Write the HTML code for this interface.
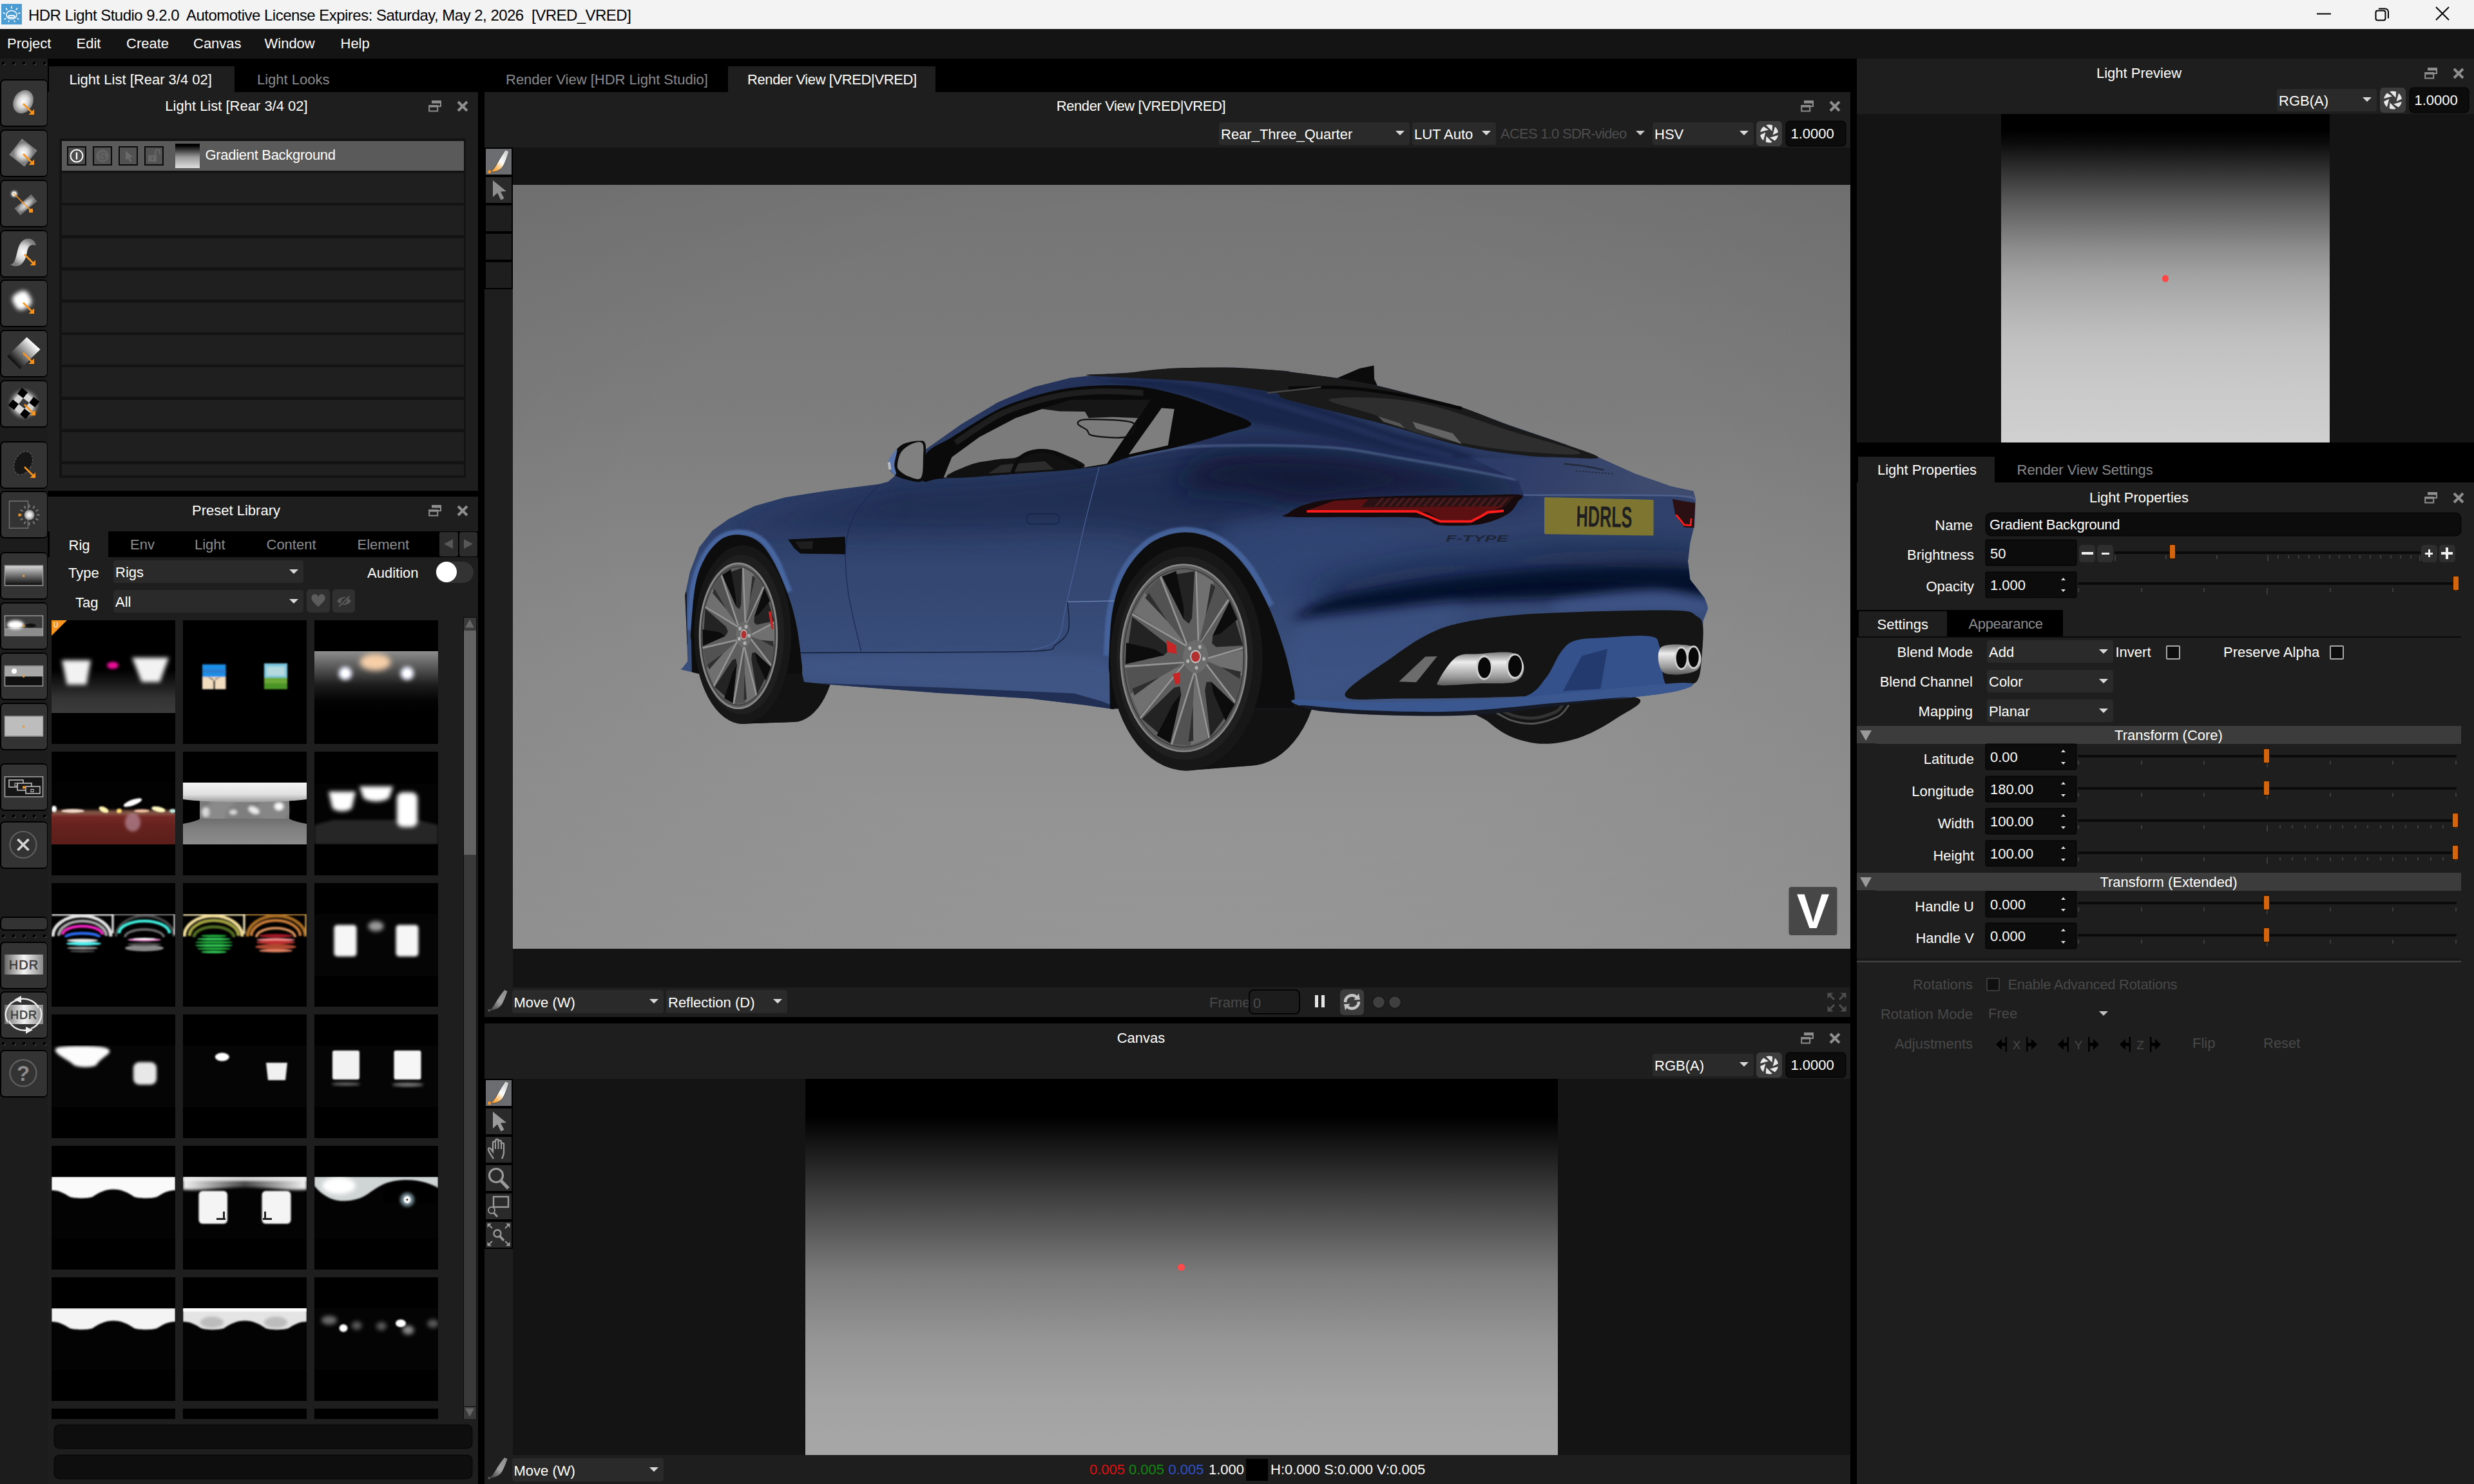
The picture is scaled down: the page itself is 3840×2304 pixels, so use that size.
<!DOCTYPE html>
<html lang="en"><head><meta charset="utf-8"><title>HDR Light Studio</title>
<style>
html,body{margin:0;padding:0}
body{width:3840px;height:2304px;background:#000;position:relative;overflow:hidden;font-family:"Liberation Sans",sans-serif;font-size:22px;color:#fff}
body div,body svg{position:absolute;box-sizing:content-box}
svg{overflow:visible;display:block}
</style></head>
<body>
<svg width="0" height="0" style="position:absolute"><defs>
<radialGradient id="rgw"><stop offset="0" stop-color="#fff"/><stop offset="0.5" stop-color="#d8d8d8"/><stop offset="1" stop-color="#7e7e7e"/></radialGradient>
<radialGradient id="rgs"><stop offset="0" stop-color="#fff"/><stop offset="0.35" stop-color="#f0f0f0"/><stop offset="1" stop-color="#333" stop-opacity="0"/></radialGradient>
<radialGradient id="rgk"><stop offset="0.55" stop-color="#fff" stop-opacity="0.8"/><stop offset="1" stop-color="#333" stop-opacity="0"/></radialGradient>
<linearGradient id="lgd" x1="0" y1="1" x2="1" y2="0"><stop offset="0" stop-color="#000"/><stop offset="1" stop-color="#fff"/></linearGradient>
<linearGradient id="lgd2" gradientUnits="userSpaceOnUse" x1="17" y1="50" x2="50" y2="19"><stop offset="0" stop-color="#000"/><stop offset="1" stop-color="#fff"/></linearGradient>
<linearGradient id="brg" gradientUnits="userSpaceOnUse" x1="32" y1="5" x2="9" y2="36"><stop offset="0" stop-color="#d0d0d0"/><stop offset="0.450" stop-color="#ffffff"/><stop offset="0.720" stop-color="#ffc070"/><stop offset="1" stop-color="#f7941d"/></linearGradient>
<linearGradient id="brg2" gradientUnits="userSpaceOnUse" x1="28" y1="3" x2="5" y2="33"><stop offset="0" stop-color="#8e8e8e"/><stop offset="0.500" stop-color="#a0a0a0"/><stop offset="1" stop-color="#3c3c3c"/></linearGradient>
<linearGradient id="lgv" x1="0" y1="0" x2="0" y2="1"><stop offset="0" stop-color="#d8d8d8"/><stop offset="1" stop-color="#0a0a0a"/></linearGradient>
<linearGradient id="lgs" x1="0" y1="0" x2="1" y2="0"><stop offset="0" stop-color="#666"/><stop offset="0.5" stop-color="#f4f4f4"/><stop offset="1" stop-color="#888"/></linearGradient>
<filter id="b1" x="-50%" y="-50%" width="200%" height="200%"><feGaussianBlur stdDeviation="1"/></filter>
<filter id="b2" x="-50%" y="-50%" width="200%" height="200%"><feGaussianBlur stdDeviation="2"/></filter>
<filter id="b3" x="-50%" y="-50%" width="200%" height="200%"><feGaussianBlur stdDeviation="3"/></filter>
<filter id="b4" x="-50%" y="-50%" width="200%" height="200%"><feGaussianBlur stdDeviation="4.5"/></filter>
<filter id="b6" x="-50%" y="-50%" width="200%" height="200%"><feGaussianBlur stdDeviation="6"/></filter>
<filter id="b10" x="-50%" y="-50%" width="200%" height="200%"><feGaussianBlur stdDeviation="10"/></filter>
</defs></svg>
<div style="left:74px;top:91px;width:3766px;height:52px;background:#000;"></div>
<div style="left:76px;top:103px;width:288px;height:40px;background:#1e1e1e;"></div>
<div style="top:109px;height:30px;line-height:30px;font-size:22px;color:#fff;white-space:pre;left:107.5px;">Light List [Rear 3/4 02]</div>
<div style="top:108.5px;height:30px;line-height:30px;font-size:22px;color:#8a8a8a;white-space:pre;left:399px;">Light Looks</div>
<div style="left:74px;top:142.5px;width:668px;height:619px;background:#1e1e1e;"></div>
<div style="top:150px;height:30px;line-height:30px;font-size:22px;color:#fff;white-space:pre;left:67px;width:600px;text-align:center;">Light List [Rear 3/4 02]</div>
<svg style="left:664.5px;top:156px;" width="20" height="18" viewBox="0 0 20 18"><path d="M5 1H19V9H15" fill="none" stroke="#8e8e8e" stroke-width="2"/><path d="M5 1H19V4.5H5Z" fill="#8e8e8e"/><rect x="1.2" y="8" width="13" height="8.5" fill="none" stroke="#8e8e8e" stroke-width="2"/><rect x="1" y="7" width="13.4" height="3.6" fill="#8e8e8e"/></svg>
<svg style="left:708.5px;top:156px;" width="18" height="18" viewBox="0 0 18 18"><path d="M2 2L16 16M16 2L2 16" stroke="#8e8e8e" stroke-width="4" fill="none"/></svg>
<div style="left:92px;top:215px;width:631px;height:527px;background:#131313;"></div>
<div style="left:95.8px;top:219px;width:624.2px;height:45.6px;background:#5a5a5a;"></div>
<div style="left:95.8px;top:269.2px;width:624.2px;height:45.6px;background:#1f1f1f;"></div>
<div style="left:95.8px;top:319.4px;width:624.2px;height:45.6px;background:#1f1f1f;"></div>
<div style="left:95.8px;top:369.6px;width:624.2px;height:45.6px;background:#1f1f1f;"></div>
<div style="left:95.8px;top:419.8px;width:624.2px;height:45.6px;background:#1f1f1f;"></div>
<div style="left:95.8px;top:470px;width:624.2px;height:45.6px;background:#1f1f1f;"></div>
<div style="left:95.8px;top:520.2px;width:624.2px;height:45.6px;background:#1f1f1f;"></div>
<div style="left:95.8px;top:570.4px;width:624.2px;height:45.6px;background:#1f1f1f;"></div>
<div style="left:95.8px;top:620.6px;width:624.2px;height:45.6px;background:#1f1f1f;"></div>
<div style="left:95.8px;top:670.8px;width:624.2px;height:45.6px;background:#1f1f1f;"></div>
<div style="left:95.8px;top:721px;width:624.2px;height:17px;background:#1f1f1f;"></div>
<div style="left:104px;top:227px;width:30px;height:30px;background:#4c4c4c;box-sizing:border-box;border:2px solid #0a0a0a;"></div>
<div style="left:144px;top:227px;width:30px;height:30px;background:#525252;box-sizing:border-box;border:2px solid #0a0a0a;"></div>
<div style="left:184px;top:227px;width:30px;height:30px;background:#525252;box-sizing:border-box;border:2px solid #0a0a0a;"></div>
<div style="left:224px;top:227px;width:30px;height:30px;background:#525252;box-sizing:border-box;border:2px solid #0a0a0a;"></div>
<svg style="left:104px;top:227px;" width="30" height="30" viewBox="0 0 30 30"><circle cx="15" cy="15" r="9.5" fill="none" stroke="#fff" stroke-width="2"/><path d="M15 9.5v11" stroke="#fff" stroke-width="2.4"/></svg>
<svg style="left:144px;top:227px;" width="30" height="30" viewBox="0 0 30 30"><circle cx="15" cy="15" r="10" fill="#626262"/><text x="15" y="21.5" font-family="Liberation Sans, sans-serif" font-size="18" font-weight="bold" text-anchor="middle" fill="#565656">S</text></svg>
<svg style="left:184px;top:227px;" width="30" height="30" viewBox="0 0 30 30"><path d="M11 7v15l4-3.5 3 6 2.5-1.2-3-6 5-.3z" fill="#6a6a6a"/></svg>
<svg style="left:224px;top:227px;" width="30" height="30" viewBox="0 0 30 30"><rect x="6" y="14" width="13" height="10" fill="#676767"/><path d="M17 14v-5a3.5 3.5 0 0 1 7 0v3" fill="none" stroke="#676767" stroke-width="2.2"/><rect x="11.5" y="17" width="2" height="4" fill="#525252"/></svg>
<div style="left:271.7px;top:223px;width:38px;height:38px;background:linear-gradient(#000 0%,#000 8%,#9a9a9a 55%,#e0e0e0 100%);"></div>
<div style="top:226px;height:30px;line-height:30px;font-size:22px;color:#fff;white-space:pre;left:318.5px;letter-spacing:-0.3px;">Gradient Background</div>
<div style="left:0px;top:0px;width:3840px;height:45px;background:#f3f3f3;"></div>
<div style="left:2px;top:6px;width:32px;height:32px;background:#4b9cd3;"></div>
<svg style="left:2px;top:6px;" width="32" height="32" viewBox="0 0 32 32"><g stroke="#fff" stroke-width="1.6" fill="none"><ellipse cx="16" cy="17" rx="8" ry="6.5"/><ellipse cx="16" cy="19.5" rx="5" ry="1.6"/><path d="M16 3.5v4M7 6.5l2.3 3M25 6.5l-2.3 3M2.5 14l3.5 1M29.5 14l-3.5 1M4.5 24l3-1.5M27.5 24l-3-1.5M11 28.5l1-3M21 28.5l-1-3"/></g></svg>
<div style="top:8.5px;height:30px;line-height:30px;font-size:24px;color:#000;white-space:pre;left:44px;letter-spacing:-0.52px;">HDR Light Studio 9.2.0  Automotive License Expires: Saturday, May 2, 2026  [VRED_VRED]</div>
<svg style="left:3596px;top:20px;" width="22" height="3" viewBox="0 0 22 3"><rect width="22" height="2" y="0.5" fill="#000"/></svg>
<svg style="left:3686px;top:10px;" width="24" height="24" viewBox="0 0 24 24"><rect x="1.5" y="6.5" width="15" height="15" rx="3" fill="none" stroke="#000" stroke-width="2"/><path d="M6 3.5h10a5 5 0 0 1 5 5v10" fill="none" stroke="#000" stroke-width="2"/></svg>
<svg style="left:3780px;top:10px;" width="22" height="22" viewBox="0 0 22 22"><path d="M1 1L21 21M21 1L1 21" stroke="#000" stroke-width="2" fill="none"/></svg>
<div style="left:0px;top:45px;width:3840px;height:46px;background:#141414;"></div>
<div style="top:53px;height:30px;line-height:30px;font-size:22px;color:#fff;white-space:pre;left:11px;">Project</div>
<div style="top:53px;height:30px;line-height:30px;font-size:22px;color:#fff;white-space:pre;left:118.5px;">Edit</div>
<div style="top:53px;height:30px;line-height:30px;font-size:22px;color:#fff;white-space:pre;left:196px;">Create</div>
<div style="top:53px;height:30px;line-height:30px;font-size:22px;color:#fff;white-space:pre;left:300px;">Canvas</div>
<div style="top:53px;height:30px;line-height:30px;font-size:22px;color:#fff;white-space:pre;left:410.5px;">Window</div>
<div style="top:53px;height:30px;line-height:30px;font-size:22px;color:#fff;white-space:pre;left:528.5px;">Help</div>
<div style="left:0px;top:91px;width:74px;height:2213px;background:#1c1c1c;"></div>
<div style="left:4.5px;top:97.5px;width:3.5px;height:3.5px;background:#4a4a4a;"></div>
<div style="left:3px;top:96px;width:3.5px;height:3.5px;background:#000;"></div>
<div style="left:20.5px;top:97.5px;width:3.5px;height:3.5px;background:#4a4a4a;"></div>
<div style="left:19px;top:96px;width:3.5px;height:3.5px;background:#000;"></div>
<div style="left:36.5px;top:97.5px;width:3.5px;height:3.5px;background:#4a4a4a;"></div>
<div style="left:35px;top:96px;width:3.5px;height:3.5px;background:#000;"></div>
<div style="left:52.5px;top:97.5px;width:3.5px;height:3.5px;background:#4a4a4a;"></div>
<div style="left:51px;top:96px;width:3.5px;height:3.5px;background:#000;"></div>
<div style="left:68.5px;top:97.5px;width:3.5px;height:3.5px;background:#4a4a4a;"></div>
<div style="left:67px;top:96px;width:3.5px;height:3.5px;background:#000;"></div>
<div style="left:0px;top:122.5px;width:74px;height:74px;background:#000;border-radius:7px;"></div>
<div style="left:2px;top:124.5px;width:70.5px;height:70px;background:#333;border-radius:5px;"></div>
<svg style="left:2px;top:124.5px;" width="70.5" height="70" viewBox="0 0 70.5 70"><ellipse cx="34" cy="33" rx="15" ry="19" transform="rotate(28 34 33)" fill="url(#rgw)"/><path d="M34 36 l13 13" stroke="#f7941d" stroke-width="2.6" fill="none"/><path d="M51 53 h-8.5 l8.5 -8.5z" fill="#f7941d"/></svg>
<div style="left:0px;top:200.5px;width:74px;height:74px;background:#000;border-radius:7px;"></div>
<div style="left:2px;top:202.5px;width:70.5px;height:70px;background:#333;border-radius:5px;"></div>
<svg style="left:2px;top:202.5px;" width="70.5" height="70" viewBox="0 0 70.5 70"><rect x="19" y="18" width="30" height="32" transform="rotate(38 34 34)" fill="url(#rgw)"/><path d="M34 36 l13 13" stroke="#f7941d" stroke-width="2.6" fill="none"/><path d="M51 53 h-8.5 l8.5 -8.5z" fill="#f7941d"/></svg>
<div style="left:0px;top:278.5px;width:74px;height:74px;background:#000;border-radius:7px;"></div>
<div style="left:2px;top:280.5px;width:70.5px;height:70px;background:#333;border-radius:5px;"></div>
<svg style="left:2px;top:280.5px;" width="70.5" height="70" viewBox="0 0 70.5 70"><circle cx="20" cy="20" r="8" fill="url(#rgs)"/><rect x="21" y="30" width="34" height="14" transform="rotate(-40 38 37)" fill="url(#rgw)" opacity="0.85"/><path d="M19 19 l27 27" stroke="#f7941d" stroke-width="1.600"/><rect x="43" y="43" width="6" height="6" fill="#f7941d"/></svg>
<div style="left:0px;top:356.5px;width:74px;height:74px;background:#000;border-radius:7px;"></div>
<div style="left:2px;top:358.5px;width:70.5px;height:70px;background:#333;border-radius:5px;"></div>
<svg style="left:2px;top:358.5px;" width="70.5" height="70" viewBox="0 0 70.5 70"><path d="M14 52 C26 50 22 22 34 14 C44 8 52 14 54 22 C46 20 42 22 40 32 C38 46 30 60 14 52Z" fill="url(#rgw)"/><path d="M36 36 l13 13" stroke="#f7941d" stroke-width="2.6" fill="none"/><path d="M53 53 h-8.5 l8.5 -8.5z" fill="#f7941d"/></svg>
<div style="left:0px;top:434.4px;width:74px;height:74px;background:#000;border-radius:7px;"></div>
<div style="left:2px;top:436.4px;width:70.5px;height:70px;background:#333;border-radius:5px;"></div>
<svg style="left:2px;top:436.4px;" width="70.5" height="70" viewBox="0 0 70.5 70"><rect x="19" y="17" width="27" height="27" rx="9" transform="rotate(-30 32 31)" fill="#fff" filter="url(#b3)"/><path d="M34 34 l13 13" stroke="#f7941d" stroke-width="2.6" fill="none"/><path d="M51 51 h-8.5 l8.5 -8.5z" fill="#f7941d"/></svg>
<div style="left:0px;top:512.3px;width:74px;height:74px;background:#000;border-radius:7px;"></div>
<div style="left:2px;top:514.3px;width:70.5px;height:70px;background:#333;border-radius:5px;"></div>
<svg style="left:2px;top:514.3px;" width="70.5" height="70" viewBox="0 0 70.5 70"><path d="M39.500 9.500L60.500 28.500L29 59L9 39Z" fill="url(#lgd2)"/><path d="M34 34 l13 13" stroke="#f7941d" stroke-width="2.6" fill="none"/><path d="M51 51 h-8.5 l8.5 -8.5z" fill="#f7941d"/></svg>
<div style="left:0px;top:590.2px;width:74px;height:74px;background:#000;border-radius:7px;"></div>
<div style="left:2px;top:592.2px;width:70.5px;height:70px;background:#333;border-radius:5px;"></div>
<svg style="left:2px;top:592.2px;" width="70.5" height="70" viewBox="0 0 70.5 70"><circle cx="35" cy="35" r="27" fill="url(#rgk)"/><g fill="#000" transform="rotate(38 35 34)"><rect x="18" y="17" width="11.500" height="11.500"/><rect x="29.500" y="28.500" width="11.500" height="11.500" fill="#3a3a3a"/><rect x="41" y="17" width="11.500" height="11.500"/><rect x="18" y="40" width="11.500" height="11.500"/><rect x="41" y="40" width="11.500" height="11.500"/></g><path d="M36 36 l13 13" stroke="#f7941d" stroke-width="2.6" fill="none"/><path d="M53 53 h-8.5 l8.5 -8.5z" fill="#f7941d"/></svg>
<div style="left:0px;top:684.5px;width:74px;height:74px;background:#000;border-radius:7px;"></div>
<div style="left:2px;top:686.5px;width:70.5px;height:70px;background:#333;border-radius:5px;"></div>
<svg style="left:2px;top:686.5px;" width="70.5" height="70" viewBox="0 0 70.5 70"><ellipse cx="34" cy="32" rx="13" ry="19" transform="rotate(28 34 32)" fill="#161616" stroke="#5a5a5a" stroke-width="1.3" stroke-dasharray="3 2.5"/><path d="M36 38 l13 13" stroke="#f7941d" stroke-width="2.6" fill="none"/><path d="M53 55 h-8.5 l8.5 -8.5z" fill="#f7941d"/></svg>
<div style="left:0px;top:761.5px;width:74px;height:74px;background:#000;border-radius:7px;"></div>
<div style="left:2px;top:763.5px;width:70.5px;height:70px;background:#333;border-radius:5px;"></div>
<svg style="left:2px;top:763.5px;" width="70.5" height="70" viewBox="0 0 70.5 70"><rect x="12.500" y="14" width="29" height="42" fill="none" stroke="#6e6e6e" stroke-width="1.600"/><circle cx="43.500" cy="35.500" r="8" fill="url(#rgw)"/><path d="M55.0 35.5 L59.5 35.5" stroke="#7c7c7c" stroke-width="2"/><path d="M53.5 41.2 L57.4 43.5" stroke="#7c7c7c" stroke-width="2"/><path d="M49.2 45.5 L51.5 49.4" stroke="#7c7c7c" stroke-width="2"/><path d="M43.5 47.0 L43.5 51.5" stroke="#7c7c7c" stroke-width="2"/><path d="M37.8 45.5 L35.5 49.4" stroke="#7c7c7c" stroke-width="2"/><path d="M33.5 41.2 L29.6 43.5" stroke="#7c7c7c" stroke-width="2"/><path d="M32.0 35.5 L27.5 35.5" stroke="#7c7c7c" stroke-width="2"/><path d="M33.5 29.8 L29.6 27.5" stroke="#7c7c7c" stroke-width="2"/><path d="M37.7 25.5 L35.5 21.6" stroke="#7c7c7c" stroke-width="2"/><path d="M43.5 24.0 L43.5 19.5" stroke="#7c7c7c" stroke-width="2"/><path d="M49.2 25.5 L51.5 21.6" stroke="#7c7c7c" stroke-width="2"/><path d="M53.5 29.7 L57.4 27.5" stroke="#7c7c7c" stroke-width="2"/><rect x="26.500" y="33.500" width="4" height="4" fill="#f7941d"/></svg>
<div style="left:0px;top:857px;width:74px;height:74px;background:#000;border-radius:7px;"></div>
<div style="left:2px;top:859px;width:70.5px;height:70px;background:#333;border-radius:5px;"></div>
<svg style="left:2px;top:859px;" width="70.5" height="70" viewBox="0 0 70.5 70"><rect x="6" y="19.5" width="58" height="30" fill="url(#lgv)"/><rect x="5.5" y="19" width="59" height="31" fill="none" stroke="#a0a0a0" stroke-width="1.4"/><rect x="33" y="33.5" width="3.2" height="3.2" fill="#f7941d"/></svg>
<div style="left:0px;top:935px;width:74px;height:74px;background:#000;border-radius:7px;"></div>
<div style="left:2px;top:937px;width:70.5px;height:70px;background:#333;border-radius:5px;"></div>
<svg style="left:2px;top:937px;" width="70.5" height="70" viewBox="0 0 70.5 70"><rect x="6" y="19.5" width="58" height="30" fill="#3a3a3a"/><rect x="6" y="38" width="58" height="11.5" fill="#8c8c8c"/><ellipse cx="22" cy="33" rx="13" ry="7" fill="#fff" filter="url(#b2)"/><ellipse cx="46" cy="34" rx="8" ry="3" fill="#111"/><rect x="5.5" y="19" width="59" height="31" fill="none" stroke="#a0a0a0" stroke-width="1.4"/><rect x="33" y="33.5" width="3.2" height="3.2" fill="#f7941d"/></svg>
<div style="left:0px;top:1013px;width:74px;height:74px;background:#000;border-radius:7px;"></div>
<div style="left:2px;top:1015px;width:70.5px;height:70px;background:#333;border-radius:5px;"></div>
<svg style="left:2px;top:1015px;" width="70.5" height="70" viewBox="0 0 70.5 70"><rect x="6" y="19.5" width="58" height="16" fill="#a8a8a8"/><rect x="6" y="35.5" width="58" height="14" fill="#101010"/><circle cx="20" cy="27" r="4" fill="#fff"/><rect x="5.5" y="19" width="59" height="31" fill="none" stroke="#a0a0a0" stroke-width="1.4"/><rect x="33" y="33.5" width="3.2" height="3.2" fill="#f7941d"/></svg>
<div style="left:0px;top:1091px;width:74px;height:74px;background:#000;border-radius:7px;"></div>
<div style="left:2px;top:1093px;width:70.5px;height:70px;background:#333;border-radius:5px;"></div>
<svg style="left:2px;top:1093px;" width="70.5" height="70" viewBox="0 0 70.5 70"><rect x="6" y="19.5" width="58" height="30" fill="#bdbdbd"/><rect x="5.5" y="19" width="59" height="31" fill="none" stroke="#a0a0a0" stroke-width="1.4"/><rect x="33" y="33.5" width="3.2" height="3.2" fill="#f7941d"/></svg>
<div style="left:0px;top:1184.5px;width:74px;height:74px;background:#000;border-radius:7px;"></div>
<div style="left:2px;top:1186.5px;width:70.5px;height:70px;background:#333;border-radius:5px;"></div>
<svg style="left:2px;top:1186.5px;" width="70.5" height="70" viewBox="0 0 70.5 70"><rect x="5.5" y="19" width="59" height="31" fill="#151515" stroke="#a0a0a0" stroke-width="1.6"/><g fill="#1b1b1b" stroke="#c8c8c8" stroke-width="1.5"><rect x="12" y="24" width="22" height="11"/><rect x="25" y="29" width="22" height="11"/><rect x="38" y="34" width="22" height="11"/></g><rect x="21" y="29" width="4" height="4" fill="none" stroke="#ccc"/><rect x="33" y="33.5" width="4" height="4" fill="#f7941d"/><rect x="46" y="38.5" width="4" height="4" fill="none" stroke="#ccc"/></svg>
<div style="left:4.5px;top:1266.5px;width:3.5px;height:3.5px;background:#4a4a4a;"></div>
<div style="left:3px;top:1265px;width:3.5px;height:3.5px;background:#000;"></div>
<div style="left:20.5px;top:1266.5px;width:3.5px;height:3.5px;background:#4a4a4a;"></div>
<div style="left:19px;top:1265px;width:3.5px;height:3.5px;background:#000;"></div>
<div style="left:36.5px;top:1266.5px;width:3.5px;height:3.5px;background:#4a4a4a;"></div>
<div style="left:35px;top:1265px;width:3.5px;height:3.5px;background:#000;"></div>
<div style="left:52.5px;top:1266.5px;width:3.5px;height:3.5px;background:#4a4a4a;"></div>
<div style="left:51px;top:1265px;width:3.5px;height:3.5px;background:#000;"></div>
<div style="left:68.5px;top:1266.5px;width:3.5px;height:3.5px;background:#4a4a4a;"></div>
<div style="left:67px;top:1265px;width:3.5px;height:3.5px;background:#000;"></div>
<div style="left:0px;top:1275px;width:74px;height:74px;background:#000;border-radius:7px;"></div>
<div style="left:2px;top:1277px;width:70.5px;height:70px;background:#333;border-radius:5px;"></div>
<svg style="left:2px;top:1277px;" width="70.5" height="70" viewBox="0 0 70.5 70"><circle cx="34" cy="34.5" r="20.5" fill="none" stroke="#5e5e5e" stroke-width="2.200"/><path d="M25.500 26l17 17M42.500 26l-17 17" stroke="#d6d6d6" stroke-width="3.800"/></svg>
<div style="left:0px;top:1423px;width:74px;height:22px;background:#000;border-radius:7px;"></div>
<div style="left:2px;top:1425px;width:70.5px;height:18px;background:#333;border-radius:5px;"></div>
<div style="left:4.5px;top:1452.5px;width:3.5px;height:3.5px;background:#4a4a4a;"></div>
<div style="left:3px;top:1451px;width:3.5px;height:3.5px;background:#000;"></div>
<div style="left:20.5px;top:1452.5px;width:3.5px;height:3.5px;background:#4a4a4a;"></div>
<div style="left:19px;top:1451px;width:3.5px;height:3.5px;background:#000;"></div>
<div style="left:36.5px;top:1452.5px;width:3.5px;height:3.5px;background:#4a4a4a;"></div>
<div style="left:35px;top:1451px;width:3.5px;height:3.5px;background:#000;"></div>
<div style="left:52.5px;top:1452.5px;width:3.5px;height:3.5px;background:#4a4a4a;"></div>
<div style="left:51px;top:1451px;width:3.5px;height:3.5px;background:#000;"></div>
<div style="left:68.5px;top:1452.5px;width:3.5px;height:3.5px;background:#4a4a4a;"></div>
<div style="left:67px;top:1451px;width:3.5px;height:3.5px;background:#000;"></div>
<div style="left:0px;top:1462px;width:74px;height:74px;background:#000;border-radius:7px;"></div>
<div style="left:2px;top:1464px;width:70.5px;height:70px;background:#333;border-radius:5px;"></div>
<svg style="left:2px;top:1464px;" width="70.5" height="70" viewBox="0 0 70.5 70"><rect x="5" y="18" width="60" height="31" fill="url(#lgs)"/><text x="35" y="40.5" font-family="Liberation Sans, sans-serif" font-size="20" text-anchor="middle" fill="#3a3a3a" letter-spacing="1" stroke="#3a3a3a" stroke-width="0.500">HDR</text></svg>
<div style="left:0px;top:1539px;width:74px;height:74px;background:#000;border-radius:7px;"></div>
<div style="left:2px;top:1541px;width:70.5px;height:70px;background:#333;border-radius:5px;"></div>
<svg style="left:2px;top:1541px;" width="70.5" height="70" viewBox="0 0 70.5 70"><rect x="5" y="19" width="60" height="30" fill="url(#lgs)"/><text x="35" y="40.500" font-family="Liberation Sans, sans-serif" font-size="18" text-anchor="middle" fill="#3a3a3a" letter-spacing="1" stroke="#3a3a3a" stroke-width="0.500">HDR</text><path d="M10 46 A26 24 0 0 1 27 11" fill="none" stroke="#ececec" stroke-width="2.400"/><path d="M58 24 A26 24 0 0 0 30 10" fill="none" stroke="#ececec" stroke-width="2.400"/><path d="M20 11l11-6 0 11z" fill="#ececec"/><path d="M60 24 A26 24 0 0 1 46 56" fill="none" stroke="#ececec" stroke-width="2.400"/><path d="M12 44 A26 24 0 0 0 42 58" fill="none" stroke="#ececec" stroke-width="2.400"/><path d="M49 58l-11 6 0-11z" fill="#ececec"/></svg>
<div style="left:4.5px;top:1619.5px;width:3.5px;height:3.5px;background:#4a4a4a;"></div>
<div style="left:3px;top:1618px;width:3.5px;height:3.5px;background:#000;"></div>
<div style="left:20.5px;top:1619.5px;width:3.5px;height:3.5px;background:#4a4a4a;"></div>
<div style="left:19px;top:1618px;width:3.5px;height:3.5px;background:#000;"></div>
<div style="left:36.5px;top:1619.5px;width:3.5px;height:3.5px;background:#4a4a4a;"></div>
<div style="left:35px;top:1618px;width:3.5px;height:3.5px;background:#000;"></div>
<div style="left:52.5px;top:1619.5px;width:3.5px;height:3.5px;background:#4a4a4a;"></div>
<div style="left:51px;top:1618px;width:3.5px;height:3.5px;background:#000;"></div>
<div style="left:68.5px;top:1619.5px;width:3.5px;height:3.5px;background:#4a4a4a;"></div>
<div style="left:67px;top:1618px;width:3.5px;height:3.5px;background:#000;"></div>
<div style="left:0px;top:1630px;width:74px;height:74px;background:#000;border-radius:7px;"></div>
<div style="left:2px;top:1632px;width:70.5px;height:70px;background:#333;border-radius:5px;"></div>
<svg style="left:2px;top:1632px;" width="70.5" height="70" viewBox="0 0 70.5 70"><circle cx="34" cy="34" r="20.5" fill="none" stroke="#5e5e5e" stroke-width="2.4"/><text x="34" y="46" font-family="Liberation Sans, sans-serif" font-size="33" font-weight="bold" text-anchor="middle" fill="#8c8c8c">?</text></svg>
<div style="left:74px;top:770.5px;width:668px;height:1534px;background:#1e1e1e;"></div>
<div style="top:778px;height:30px;line-height:30px;font-size:22px;color:#fff;white-space:pre;left:66.5px;width:600px;text-align:center;">Preset Library</div>
<svg style="left:664.5px;top:784px;" width="20" height="18" viewBox="0 0 20 18"><path d="M5 1H19V9H15" fill="none" stroke="#8e8e8e" stroke-width="2"/><path d="M5 1H19V4.5H5Z" fill="#8e8e8e"/><rect x="1.2" y="8" width="13" height="8.5" fill="none" stroke="#8e8e8e" stroke-width="2"/><rect x="1" y="7" width="13.4" height="3.6" fill="#8e8e8e"/></svg>
<svg style="left:708.5px;top:784px;" width="18" height="18" viewBox="0 0 18 18"><path d="M2 2L16 16M16 2L2 16" stroke="#8e8e8e" stroke-width="4" fill="none"/></svg>
<div style="left:74px;top:825px;width:668px;height:39.5px;background:#000;"></div>
<div style="left:76.5px;top:825px;width:91.2px;height:39.5px;background:#1e1e1e;"></div>
<div style="top:831.5px;height:30px;line-height:30px;font-size:22px;color:#fff;white-space:pre;left:106.5px;">Rig</div>
<div style="top:830.5px;height:30px;line-height:30px;font-size:22px;color:#8c8c8c;white-space:pre;left:202px;">Env</div>
<div style="top:830.5px;height:30px;line-height:30px;font-size:22px;color:#8c8c8c;white-space:pre;left:302px;">Light</div>
<div style="top:830.5px;height:30px;line-height:30px;font-size:22px;color:#8c8c8c;white-space:pre;left:413.5px;">Content</div>
<div style="top:830.5px;height:30px;line-height:30px;font-size:22px;color:#8c8c8c;white-space:pre;left:554.5px;">Element</div>
<div style="left:682px;top:825.5px;width:28.5px;height:38.5px;background:#2c2c2c;border-radius:3px;"></div>
<div style="left:712.5px;top:825.5px;width:28.5px;height:38.5px;background:#2c2c2c;border-radius:3px;"></div>
<svg style="left:689px;top:837px;" width="14" height="15" viewBox="0 0 14 15"><path d="M14 0v15L0 7.5z" fill="#585858"/></svg>
<svg style="left:720px;top:837px;" width="14" height="15" viewBox="0 0 14 15"><path d="M0 0v15L14 7.5z" fill="#585858"/></svg>
<div style="top:874.5px;height:30px;line-height:30px;font-size:22px;color:#fff;white-space:pre;left:106px;">Type</div>
<div style="left:176px;top:870px;width:295px;height:34.5px;background:#2a2a2a;border-radius:4px;"></div>
<div style="top:873.75px;height:30px;line-height:30px;font-size:22px;color:#fff;white-space:pre;left:179px;">Rigs</div>
<svg style="left:449px;top:883.5px;" width="14" height="7.5" viewBox="0 0 14 7.5"><path d="M0 0H14 L7.0 7 Z" fill="#d8d8d8"/></svg>
<div style="top:874.5px;height:30px;line-height:30px;font-size:22px;color:#fff;white-space:pre;left:570px;">Audition</div>
<div style="left:675.5px;top:871.5px;width:59.5px;height:33px;background:#333;border-radius:17px;"></div>
<div style="left:677px;top:872px;width:32px;height:32px;background:#fff;border-radius:16px;"></div>
<div style="top:920.5px;height:30px;line-height:30px;font-size:22px;color:#fff;white-space:pre;left:117px;">Tag</div>
<div style="left:176px;top:916px;width:295px;height:34.5px;background:#2a2a2a;border-radius:4px;"></div>
<div style="top:919.75px;height:30px;line-height:30px;font-size:22px;color:#fff;white-space:pre;left:179px;">All</div>
<svg style="left:449px;top:929.5px;" width="14" height="7.5" viewBox="0 0 14 7.5"><path d="M0 0H14 L7.0 7 Z" fill="#d8d8d8"/></svg>
<div style="left:476px;top:914.5px;width:35.5px;height:36px;background:#303030;border-radius:5px;"></div>
<div style="left:515.5px;top:914.5px;width:35.5px;height:36px;background:#303030;border-radius:5px;"></div>
<svg style="left:483px;top:923px;" width="22" height="20" viewBox="0 0 22 20"><path d="M11 19C3 12 0.5 9 0.5 5.5A5 5 0 0 1 11 4a5 5 0 0 1 10.500 1.5C21.5 9 19 12 11 19z" fill="#5c5c5c"/></svg>
<svg style="left:521.5px;top:922px;" width="24" height="22" viewBox="0 0 24 22"><path d="M1 11C6 3 18 3 23 11 18 19 6 19 1 11z" fill="#595959"/><circle cx="12" cy="11" r="4" fill="#303030"/><path d="M4 19L20 3" stroke="#303030" stroke-width="4"/><path d="M4.500 19.500L20.500 3.500" stroke="#595959" stroke-width="2"/></svg>
<div style="left:79.7px;top:963px;width:192px;height:192px;background:#000;"></div>
<svg style="left:79.7px;top:1011px;overflow:hidden;" width="192" height="96" viewBox="0 0 192 96"><defs><linearGradient id="t1" x1="0" y1="0" x2="0" y2="1"><stop offset="0" stop-color="#000"/><stop offset="0.3" stop-color="#000"/><stop offset="0.75" stop-color="#333"/><stop offset="1" stop-color="#3c3c3c"/></linearGradient></defs><rect x="0" y="0" width="192" height="96" fill="url(#t1)" /><path d="M16 14H61L54 52H24Z" fill="#f2f2f2" filter="url(#b3)"/><path d="M125 10H182L168 48H140Z" fill="#f2f2f2" filter="url(#b3)"/><ellipse cx="95" cy="22" rx="9" ry="5.5" fill="#f0109a" filter="url(#b2)"/></svg>
<div style="left:283.7px;top:963px;width:192px;height:192px;background:#000;"></div>
<svg style="left:283.7px;top:1011px;overflow:hidden;" width="192" height="96" viewBox="0 0 192 96"><g filter="url(#b1)"><rect x="30" y="20.5" width="36.5" height="20" fill="#1f8fe6" /><rect x="30" y="40" width="36.5" height="19" fill="#f1dcc0" /><path d="M38 40L48 46L58 40L50 43V59H47V43Z" fill="#111"/><rect x="30" y="28" width="36.5" height="6" fill="#2c7fd0" /><rect x="126" y="19" width="36" height="22" fill="#7ec8e0" /><rect x="126" y="41" width="36" height="18" fill="#6aa838" /><rect x="130" y="24" width="28" height="14" fill="#d8e4dc" opacity="0.6"/><rect x="126" y="50" width="36" height="9" fill="#4c9428" /></g></svg>
<div style="left:487.7px;top:963px;width:192px;height:192px;background:#000;"></div>
<svg style="left:487.7px;top:1011px;overflow:hidden;" width="192" height="96" viewBox="0 0 192 96"><defs><linearGradient id="t3" x1="0" y1="0" x2="0" y2="1"><stop offset="0" stop-color="#8e8e8e"/><stop offset="0.25" stop-color="#5a5a5a"/><stop offset="0.55" stop-color="#1c1c1c"/><stop offset="0.8" stop-color="#040404"/><stop offset="1" stop-color="#000"/></linearGradient></defs><rect x="0" y="0" width="192" height="96" fill="url(#t3)" /><ellipse cx="94.5" cy="17" rx="24" ry="13" fill="#f6cfa8" filter="url(#b4)"/><ellipse cx="48" cy="34.5" rx="10.5" ry="10.5" fill="#eef2ff" filter="url(#b3)"/><ellipse cx="144" cy="34.5" rx="10.5" ry="10.5" fill="#eef2ff" filter="url(#b3)"/><ellipse cx="48" cy="34.5" rx="5" ry="5" fill="#fff" filter="url(#b1)"/><ellipse cx="144" cy="34.5" rx="5" ry="5" fill="#fff" filter="url(#b1)"/></svg>
<div style="left:79.7px;top:1167px;width:192px;height:192px;background:#000;"></div>
<svg style="left:79.7px;top:1215px;overflow:hidden;" width="192" height="96" viewBox="0 0 192 96"><defs><linearGradient id="t4" x1="0" y1="0" x2="0" y2="1"><stop offset="0" stop-color="#7a2a26"/><stop offset="0.4" stop-color="#66221e"/><stop offset="1" stop-color="#5a1e1a"/></linearGradient></defs><rect x="0" y="0" width="192" height="96" fill="#020202" /><rect x="0" y="48" width="192" height="48" fill="url(#t4)" /><g filter="url(#b2)"><rect x="0" y="43" width="192" height="7" fill="#8a5a4a" /><ellipse cx="126" cy="62" rx="12" ry="14" fill="#b88a98" opacity="0.7"/></g><g filter="url(#b1)"><ellipse cx="4" cy="41" rx="4" ry="5" fill="#fff" /><ellipse cx="33" cy="44" rx="18" ry="3" fill="#f0d8c8" /><ellipse cx="81" cy="42" rx="8" ry="4" fill="#fff6b0" transform="rotate(25 81 42)"/><ellipse cx="105" cy="44" rx="4" ry="3.5" fill="#ffe070" /><ellipse cx="126" cy="31" rx="15" ry="4.5" fill="#fff" transform="rotate(-20 126 31)"/><ellipse cx="166" cy="41.5" rx="11" ry="4" fill="#fff8c0" transform="rotate(12 166 41.500)"/><ellipse cx="188" cy="44" rx="5" ry="3" fill="#c0f0e8" /><ellipse cx="140" cy="44" rx="12" ry="2.5" fill="#f0c0a0" /></g></svg>
<div style="left:283.7px;top:1167px;width:192px;height:192px;background:#000;"></div>
<svg style="left:283.7px;top:1215px;overflow:hidden;" width="192" height="96" viewBox="0 0 192 96"><defs><linearGradient id="t5a" x1="0" y1="0" x2="0" y2="1"><stop offset="0" stop-color="#f4f4f4"/><stop offset="0.6" stop-color="#e0e0e0"/><stop offset="1" stop-color="#9a9a9a"/></linearGradient><linearGradient id="t5b" x1="0" y1="0" x2="0" y2="1"><stop offset="0" stop-color="#6e6e6e"/><stop offset="0.4" stop-color="#808080"/><stop offset="1" stop-color="#8c8c8c"/></linearGradient></defs><rect x="0" y="0" width="192" height="96" fill="#000" /><rect x="26" y="24" width="139" height="40" fill="#7a7a7a" /><g filter="url(#b2)"><ellipse cx="62" cy="46" rx="26" ry="22" fill="#8a8a8a" /><ellipse cx="96" cy="52" rx="30" ry="22" fill="#7e7e7e" /><ellipse cx="140" cy="42" rx="24" ry="20" fill="#868686" /><ellipse cx="35" cy="46" rx="6" ry="8" fill="#d8d8d8" /><ellipse cx="78" cy="46" rx="6" ry="3.5" fill="#e0e0e0" /><ellipse cx="110" cy="43" rx="9" ry="5" fill="#eee" transform="rotate(25 110 43)"/><ellipse cx="149" cy="37" rx="7" ry="6" fill="#fafafa" /></g><path d="M0 0H192V26C150 32 40 32 0 26Z" fill="url(#t5a)"/><path d="M0 64C10 62 20 60 27 56H165C172 60 182 62 192 64V96H0Z" fill="url(#t5b)"/></svg>
<div style="left:487.7px;top:1167px;width:192px;height:192px;background:#000;"></div>
<svg style="left:487.7px;top:1215px;overflow:hidden;" width="192" height="96" viewBox="0 0 192 96"><rect x="0" y="0" width="192" height="96" fill="#000" /><rect x="0" y="2" width="192" height="94" fill="#030303" /><path d="M0 66L30 58H160L192 66V96H0Z" fill="#282828" filter="url(#b2)"/><g filter="url(#b3)"><path d="M22 14H64L58 40C50 46 36 46 28 40Z" fill="#fff"/><path d="M70 6H122L116 24C106 31 86 31 76 24Z" fill="#fff"/><rect x="128" y="15" width="32" height="54" fill="#fff" rx="9"/></g></svg>
<div style="left:79.7px;top:1371px;width:192px;height:192px;background:#000;"></div>
<svg style="left:79.7px;top:1419px;overflow:hidden;" width="192" height="96" viewBox="0 0 192 96"><rect x="0" y="0" width="192" height="96" fill="#000" /><g filter="url(#b1)"><rect x="0" y="0" width="96" height="2.5" fill="#f4f4f4" /><path d="M2 35 A45 32 0 0 1 92 35" fill="none" stroke="#e4e4e4" stroke-width="5" /><path d="M11 34 A37 23 0 0 1 85 34" fill="none" stroke="#a8a8a8" stroke-width="4.5" /><path d="M17 32 A31 13 0 0 1 79 32" fill="none" stroke="#f020c0" stroke-width="4.5" /><path d="M22 36 A26 6 0 0 1 74 36" fill="none" stroke="#2a6af0" stroke-width="4.5" /><ellipse cx="50" cy="46" rx="27" ry="3" fill="#50f0f0" /><ellipse cx="48" cy="41" rx="24" ry="2.5" fill="#e8e8e8" /><ellipse cx="48" cy="53" rx="24" ry="2" fill="#9a9a9a" /><ellipse cx="48" cy="58" rx="20" ry="1.5" fill="#5a5a5a" /><rect x="96" y="0" width="96" height="1.5" fill="#d0d0d0" /><path d="M100 35 A45 32 0 0 1 190 35" fill="none" stroke="#4a4a4a" stroke-width="4" /><path d="M105 30 A39 19 0 0 1 183 30" fill="none" stroke="#40f0e0" stroke-width="4.5" /><path d="M114 36 A30 12 0 0 1 174 36" fill="none" stroke="#6a6a6a" stroke-width="4" /><ellipse cx="144" cy="40" rx="26" ry="2.2" fill="#ff90e0" /><ellipse cx="144" cy="38.5" rx="18" ry="1.5" fill="#fff" /><ellipse cx="144" cy="53" rx="30" ry="5" fill="#8a8a8a" /><ellipse cx="144" cy="47" rx="26" ry="2.5" fill="#4a4a4a" /><rect x="93.5" y="0" width="3" height="30" fill="#f4f4f4" /><rect x="189.5" y="0" width="2.5" height="32" fill="#c8c8c8" /></g></svg>
<div style="left:283.7px;top:1371px;width:192px;height:192px;background:#000;"></div>
<svg style="left:283.7px;top:1419px;overflow:hidden;" width="192" height="96" viewBox="0 0 192 96"><rect x="0" y="0" width="192" height="96" fill="#000" /><g filter="url(#b1)"><rect x="0" y="0" width="96" height="2.5" fill="#fff0b8" /><path d="M2 35 A45 32 0 0 1 92 35" fill="none" stroke="#f0dc98" stroke-width="5" /><path d="M10 34 A38 24 0 0 1 86 34" fill="none" stroke="#a0a040" stroke-width="5" /><path d="M17 36 A31 16 0 0 1 79 36" fill="none" stroke="#506a20" stroke-width="5" /><ellipse cx="48" cy="34" rx="20" ry="1.8" fill="#20c040" /><ellipse cx="48" cy="39" rx="26" ry="1.8" fill="#38e060" /><ellipse cx="48" cy="44" rx="29" ry="1.8" fill="#20c040" /><ellipse cx="48" cy="49" rx="29" ry="1.8" fill="#38e060" /><ellipse cx="48" cy="54" rx="26" ry="1.8" fill="#20c040" /><ellipse cx="48" cy="59" rx="20" ry="1.8" fill="#38e060" /><rect x="96" y="0" width="96" height="2" fill="#d09840" /><path d="M100 35 A45 32 0 0 1 190 35" fill="none" stroke="#a86c24" stroke-width="5" /><path d="M106 34 A38 24 0 0 1 182 34" fill="none" stroke="#c87c38" stroke-width="4.5" /><path d="M114 36 A30 14 0 0 1 174 36" fill="none" stroke="#d8905a" stroke-width="4" /><ellipse cx="144" cy="34" rx="26" ry="3" fill="#a01828" /><ellipse cx="144" cy="40" rx="30" ry="2.2" fill="#ff9090" /><ellipse cx="144" cy="44" rx="30" ry="3" fill="#c03030" /><ellipse cx="144" cy="51" rx="32" ry="4" fill="#b04830" /><ellipse cx="144" cy="57" rx="26" ry="2.5" fill="#e08060" /><rect x="93.5" y="0" width="3" height="31" fill="#fff0c0" /><rect x="189.5" y="0" width="2.5" height="32" fill="#d8a050" /></g></svg>
<div style="left:487.7px;top:1371px;width:192px;height:192px;background:#000;"></div>
<svg style="left:487.7px;top:1419px;overflow:hidden;" width="192" height="96" viewBox="0 0 192 96"><rect x="0" y="0" width="192" height="96" fill="#000" /><rect x="0" y="0" width="192" height="96" fill="#050505" /><g filter="url(#b2)"><rect x="30.5" y="17" width="35" height="49" fill="#f6f6f6" rx="5"/><rect x="126.5" y="17" width="35" height="49" fill="#f6f6f6" rx="5"/></g><ellipse cx="95.5" cy="19" rx="12" ry="8" fill="#9a9a9a" filter="url(#b3)"/></svg>
<div style="left:79.7px;top:1575px;width:192px;height:192px;background:#000;"></div>
<svg style="left:79.7px;top:1623px;overflow:hidden;" width="192" height="96" viewBox="0 0 192 96"><rect x="0" y="0" width="192" height="96" fill="#050505" /><g filter="url(#b2)"><path d="M6 6C8 1 30 1 48 1C70 1 88 2 90 8C92 14 78 18 70 30C66 35 40 35 34 30C26 22 4 14 6 6Z" fill="#fcfcfc"/><rect x="127" y="26" width="36" height="35" fill="#e8e8e8" rx="9"/></g></svg>
<div style="left:283.7px;top:1575px;width:192px;height:192px;background:#000;"></div>
<svg style="left:283.7px;top:1623px;overflow:hidden;" width="192" height="96" viewBox="0 0 192 96"><rect x="0" y="0" width="192" height="96" fill="#050505" /><g filter="url(#b1)"><ellipse cx="60.8" cy="18" rx="11" ry="6.5" fill="#fff" /><path d="M129 27H162L159 54H132Z" fill="#f0f0f0"/></g></svg>
<div style="left:487.7px;top:1575px;width:192px;height:192px;background:#000;"></div>
<svg style="left:487.7px;top:1623px;overflow:hidden;" width="192" height="96" viewBox="0 0 192 96"><rect x="0" y="0" width="192" height="96" fill="#050505" /><g filter="url(#b1)"><rect x="28" y="8" width="42" height="45" fill="#f2f2f2" rx="3"/><rect x="123.5" y="8" width="42" height="45" fill="#f6f6f6" rx="3"/></g><ellipse cx="49" cy="60" rx="22" ry="2.5" fill="#6a6a6a" filter="url(#b2)"/><ellipse cx="145" cy="61" rx="24" ry="3" fill="#7a7a7a" filter="url(#b2)"/></svg>
<div style="left:79.7px;top:1779px;width:192px;height:192px;background:#000;"></div>
<svg style="left:79.7px;top:1827px;overflow:hidden;" width="192" height="96" viewBox="0 0 192 96"><rect x="0" y="0" width="192" height="96" fill="#030303" /><path d="M0 0H192V21C180 21 172 26 164 31C158 34 134 34 128 31C118 24 108 19.500 96 19.500C84 19.500 74 24 64 31C58 34 34 34 28 31C20 26 12 21 0 21Z" fill="#fafafa" filter="url(#b1)"/></svg>
<div style="left:283.7px;top:1779px;width:192px;height:192px;background:#000;"></div>
<svg style="left:283.7px;top:1827px;overflow:hidden;" width="192" height="96" viewBox="0 0 192 96"><defs><linearGradient id="t14" x1="0" y1="0" x2="1" y2="0"><stop offset="0" stop-color="#f4f4f4"/><stop offset="0.5" stop-color="#4a4a4a"/><stop offset="1" stop-color="#f4f4f4"/></linearGradient></defs><rect x="0" y="0" width="192" height="96" fill="#030303" /><path d="M0 0H192V20C160 22 130 16 96 16C62 16 32 22 0 20Z" fill="url(#t14)" filter="url(#b2)"/><rect x="0" y="0" width="192" height="6" fill="#f0f0f0" filter="url(#b2)"/><g filter="url(#b1)"><rect x="24.5" y="22" width="44.5" height="51" fill="#f4f4f4" rx="6"/><rect x="122.5" y="22" width="45" height="51" fill="#f4f4f4" rx="6"/></g><path d="M52 64h14v3h-14zM62 54h3v12h-3z" fill="#222"/><path d="M124 64h14v3h-14zM126 54h3v12h-3z" fill="#222"/></svg>
<div style="left:487.7px;top:1779px;width:192px;height:192px;background:#000;"></div>
<svg style="left:487.7px;top:1827px;overflow:hidden;" width="192" height="96" viewBox="0 0 192 96"><rect x="0" y="0" width="192" height="96" fill="#030303" /><path d="M0 0H192V18C180 10 160 4 140 5C115 6 100 14 84 26C70 36 50 40 32 36C18 32 8 24 0 14Z" fill="#cfd4d4" filter="url(#b1)"/><path d="M106 14C120 6 160 4 192 18V40H106Z" fill="#050505" filter="url(#b2)"/><ellipse cx="38" cy="14" rx="26" ry="13" fill="#fff" filter="url(#b3)"/><ellipse cx="144" cy="35.5" rx="11" ry="11" fill="#6a8088" filter="url(#b2)"/><ellipse cx="144" cy="35.5" rx="5.5" ry="6" fill="#fff" filter="url(#b1)"/><ellipse cx="144" cy="35.5" rx="1.5" ry="1.5" fill="#333" /></svg>
<div style="left:79.7px;top:1983px;width:192px;height:192px;background:#000;"></div>
<svg style="left:79.7px;top:2031px;overflow:hidden;" width="192" height="96" viewBox="0 0 192 96"><rect x="0" y="0" width="192" height="96" fill="#030303" /><path d="M0 0H192V21C180 21 172 26 164 31C158 34 134 34 128 31C118 24 108 19.500 96 19.500C84 19.500 74 24 64 31C58 34 34 34 28 31C20 26 12 21 0 21Z" fill="#f4f4f4" filter="url(#b1)"/></svg>
<div style="left:283.7px;top:1983px;width:192px;height:192px;background:#000;"></div>
<svg style="left:283.7px;top:2031px;overflow:hidden;" width="192" height="96" viewBox="0 0 192 96"><rect x="0" y="0" width="192" height="96" fill="#030303" /><path d="M0 0H192V21C180 21 172 26 164 31C158 34 134 34 128 31C118 24 108 19.500 96 19.500C84 19.500 74 24 64 31C58 34 34 34 28 31C20 26 12 21 0 21Z" fill="#e4e4e4" filter="url(#b1)"/><rect x="0" y="0" width="192" height="5" fill="#fff" filter="url(#b1)"/><ellipse cx="45" cy="22" rx="18" ry="9" fill="#bcbcbc" filter="url(#b2)"/><ellipse cx="144" cy="22" rx="18" ry="9" fill="#bcbcbc" filter="url(#b2)"/></svg>
<div style="left:487.7px;top:1983px;width:192px;height:192px;background:#000;"></div>
<svg style="left:487.7px;top:2031px;overflow:hidden;" width="192" height="96" viewBox="0 0 192 96"><rect x="0" y="0" width="192" height="96" fill="#040404" /><ellipse cx="23" cy="18.7" rx="12" ry="7" fill="#6a6a6a" filter="url(#b3)"/><ellipse cx="65.7" cy="27" rx="8" ry="6.5" fill="#5a5a5a" filter="url(#b3)"/><ellipse cx="104" cy="28" rx="8" ry="6.5" fill="#5a5a5a" filter="url(#b3)"/><ellipse cx="145.5" cy="34" rx="9" ry="7" fill="#8a8a8a" filter="url(#b3)"/><ellipse cx="184" cy="24" rx="9" ry="6.5" fill="#5a5a5a" filter="url(#b3)"/><ellipse cx="45" cy="31" rx="6.5" ry="6" fill="#fff" filter="url(#b1)"/><ellipse cx="134" cy="23.5" rx="8" ry="6" fill="#fff" filter="url(#b1)"/></svg>
<div style="left:79.7px;top:2187px;width:192px;height:15.5px;background:#000;"></div>
<div style="left:283.7px;top:2187px;width:192px;height:15.5px;background:#000;"></div>
<div style="left:487.7px;top:2187px;width:192px;height:15.5px;background:#000;"></div>
<svg style="left:79.7px;top:963px;" width="25" height="25" viewBox="0 0 25 25"><path d="M0 0H24L0 24z" fill="#f7941d"/><text x="3" y="11" font-family="Liberation Sans, sans-serif" font-size="10" fill="#fff">U</text></svg>
<div style="left:718.5px;top:957.5px;width:21px;height:1245.5px;background:#0c0c0c;"></div>
<div style="left:719.5px;top:978px;width:19px;height:1205px;background:#393939;"></div>
<div style="left:719.5px;top:979px;width:19px;height:348px;background:#636363;"></div>
<div style="left:719.5px;top:958.5px;width:19px;height:19px;background:#3a3a3a;"></div>
<div style="left:719.5px;top:2183.5px;width:19px;height:19px;background:#3a3a3a;"></div>
<svg style="left:722px;top:961px;" width="14" height="14" viewBox="0 0 14 14"><path d="M7 0.500L14 13.5H0z" fill="#666"/></svg>
<svg style="left:722px;top:2186px;" width="14" height="14" viewBox="0 0 14 14"><path d="M7 13.5L14 0.500H0z" fill="#666"/></svg>
<div style="left:84.5px;top:2213px;width:647px;height:35px;background:#0e0e0e;border-radius:7px;box-shadow:0 0 0 1.5px #080808;"></div>
<div style="left:84.5px;top:2259.5px;width:647px;height:35px;background:#0e0e0e;border-radius:7px;box-shadow:0 0 0 1.5px #080808;"></div>
<div style="top:108.5px;height:30px;line-height:30px;font-size:22px;color:#8a8a8a;white-space:pre;left:785px;">Render View [HDR Light Studio]</div>
<div style="left:1130px;top:103px;width:322px;height:40px;background:#1e1e1e;"></div>
<div style="top:109px;height:30px;line-height:30px;font-size:22px;color:#fff;white-space:pre;left:1160px;letter-spacing:-0.400px;">Render View [VRED|VRED]</div>
<div style="left:751.5px;top:142.5px;width:2120px;height:86.5px;background:#1e1e1e;"></div>
<div style="top:150px;height:30px;line-height:30px;font-size:22px;color:#fff;white-space:pre;left:1471px;width:600px;text-align:center;letter-spacing:-0.400px;">Render View [VRED|VRED]</div>
<svg style="left:2794.5px;top:156px;" width="20" height="18" viewBox="0 0 20 18"><path d="M5 1H19V9H15" fill="none" stroke="#8e8e8e" stroke-width="2"/><path d="M5 1H19V4.5H5Z" fill="#8e8e8e"/><rect x="1.2" y="8" width="13" height="8.5" fill="none" stroke="#8e8e8e" stroke-width="2"/><rect x="1" y="7" width="13.4" height="3.6" fill="#8e8e8e"/></svg>
<svg style="left:2839px;top:156px;" width="18" height="18" viewBox="0 0 18 18"><path d="M2 2L16 16M16 2L2 16" stroke="#8e8e8e" stroke-width="4" fill="none"/></svg>
<div style="left:1892px;top:189.5px;width:295.5px;height:35px;background:#2a2a2a;border-radius:4px;"></div>
<div style="top:193.5px;height:30px;line-height:30px;font-size:22px;color:#fff;white-space:pre;left:1895px;">Rear_Three_Quarter</div>
<svg style="left:2165.5px;top:203.25px;" width="14" height="7.5" viewBox="0 0 14 7.5"><path d="M0 0H14 L7.0 7 Z" fill="#d8d8d8"/></svg>
<div style="left:2192px;top:189.5px;width:129.5px;height:35px;background:#2a2a2a;border-radius:4px;"></div>
<div style="top:193.5px;height:30px;line-height:30px;font-size:22px;color:#fff;white-space:pre;left:2195px;">LUT Auto</div>
<svg style="left:2299.5px;top:203.25px;" width="14" height="7.5" viewBox="0 0 14 7.5"><path d="M0 0H14 L7.0 7 Z" fill="#d8d8d8"/></svg>
<div style="top:193px;height:30px;line-height:30px;font-size:22px;color:#4c4c4c;white-space:pre;left:2329px;letter-spacing:-0.750px;">ACES 1.0 SDR-video</div>
<svg style="left:2539px;top:203.25px;" width="14" height="7.5" viewBox="0 0 14 7.5"><path d="M0 0H14 L7.0 7 Z" fill="#c8c8c8"/></svg>
<div style="left:2565px;top:189.5px;width:156.5px;height:35px;background:#2a2a2a;border-radius:4px;"></div>
<div style="top:193.5px;height:30px;line-height:30px;font-size:22px;color:#fff;white-space:pre;left:2568px;">HSV</div>
<svg style="left:2699.5px;top:203.25px;" width="14" height="7.5" viewBox="0 0 14 7.5"><path d="M0 0H14 L7.0 7 Z" fill="#d8d8d8"/></svg>
<div style="left:2725.5px;top:187.5px;width:40px;height:39px;background:#3c3c3c;border-radius:6px;"></div>
<svg style="left:2725.5px;top:187.5px;" width="40" height="39" viewBox="0 0 40 39"><path d="M33.8 21.9 A14 14 0 0 1 28.6 30.5 L21.0 25.4 Z" fill="#e8e8e8"/><path d="M24.8 32.7 A14 14 0 0 1 14.8 32.5 L15.4 23.3 Z" fill="#e8e8e8"/><path d="M11.0 30.2 A14 14 0 0 1 6.1 21.4 L14.4 17.4 Z" fill="#e8e8e8"/><path d="M6.2 17.1 A14 14 0 0 1 11.4 8.5 L19.0 13.6 Z" fill="#e8e8e8"/><path d="M15.2 6.3 A14 14 0 0 1 25.2 6.5 L24.6 15.7 Z" fill="#e8e8e8"/><path d="M29.0 8.8 A14 14 0 0 1 33.9 17.6 L25.6 21.6 Z" fill="#e8e8e8"/></svg>
<div style="left:2772.5px;top:188.5px;width:91px;height:37px;background:#0c0c0c;border-radius:5px;box-shadow:0 0 0 1.5px #050505;"></div>
<div style="top:193px;height:30px;line-height:30px;font-size:22px;color:#fff;white-space:pre;left:2779.5px;">1.0000</div>
<div style="left:751.5px;top:229px;width:2120px;height:1304px;background:#141414;"></div>
<div style="left:751.5px;top:229px;width:44.5px;height:1304px;background:#1e1e1e;"></div>
<div style="left:751.5px;top:229px;width:44.5px;height:220px;background:#000;"></div>
<div style="left:754px;top:231px;width:40px;height:40px;background:#6c6d70;"></div>
<svg style="left:754px;top:231px;" width="40" height="40" viewBox="0 0 40 40"><path d="M30.500 1.500 L36 4 C33.500 12 31 20 27 27 C23 33.500 15 36.500 7 36 C12.500 32 15 27.500 18 22 C22 15 26 8 30.500 1.500Z" fill="url(#brg)" stroke="#3a3a3a" stroke-width="0.800"/><rect x="3.500" y="33.500" width="4.500" height="4.500" fill="#f7941d"/></svg>
<div style="left:754px;top:275px;width:40px;height:40px;background:#2a2a2a;"></div>
<svg style="left:754px;top:275px;" width="40" height="40" viewBox="0 0 40 40"><path d="M11 5v26l7-6.500 5.500 11 5-2.500-5.500-10.500 9-.5z" fill="#8e8e8e"/></svg>
<div style="left:754px;top:319px;width:40px;height:40px;background:#1e1e1e;"></div>
<div style="left:754px;top:363px;width:40px;height:40px;background:#1e1e1e;"></div>
<div style="left:754px;top:407px;width:40px;height:40px;background:#1e1e1e;"></div>
<svg style="left:796px;top:287px;overflow:hidden;" width="2076" height="1186" viewBox="796 287 2076 1186"><defs>
<linearGradient id="bgc" x1="0" y1="0" x2="0" y2="1"><stop offset="0" stop-color="#757575"/><stop offset="0.3" stop-color="#7d7d7d"/><stop offset="0.62" stop-color="#8c8c8c"/><stop offset="1" stop-color="#9a9a9a"/></linearGradient>
<radialGradient id="vig" cx="0.5" cy="0.45" r="0.75"><stop offset="0.55" stop-color="#000" stop-opacity="0"/><stop offset="1" stop-color="#000" stop-opacity="0.07"/></radialGradient>
<linearGradient id="bodyg" gradientUnits="userSpaceOnUse" x1="0" y1="600" x2="0" y2="1120"><stop offset="0" stop-color="#22335e"/><stop offset="0.3" stop-color="#2b406e"/><stop offset="0.62" stop-color="#304878"/><stop offset="0.85" stop-color="#364f82"/><stop offset="1" stop-color="#3a5588"/></linearGradient>
<linearGradient id="pipe" x1="0" y1="0" x2="0" y2="1"><stop offset="0" stop-color="#7a7a7a"/><stop offset="0.3" stop-color="#ededed"/><stop offset="0.75" stop-color="#9a9a9a"/><stop offset="1" stop-color="#5a5a5a"/></linearGradient>
<linearGradient id="deck" gradientUnits="userSpaceOnUse" x1="2300" y1="700" x2="2560" y2="760"><stop offset="0" stop-color="#273a6c"/><stop offset="1" stop-color="#3b4a73"/></linearGradient>
<filter id="desat" x="0" y="0" width="100%" height="100%"><feColorMatrix type="saturate" values="0.86"/></filter>
<filter id="cb2" x="-20%" y="-20%" width="140%" height="140%"><feGaussianBlur stdDeviation="1.800"/></filter>
<filter id="cb3" x="-20%" y="-20%" width="140%" height="140%"><feGaussianBlur stdDeviation="3"/></filter>
<filter id="cb8" x="-30%" y="-30%" width="160%" height="160%"><feGaussianBlur stdDeviation="8"/></filter>
<filter id="cb12" x="-30%" y="-50%" width="160%" height="200%"><feGaussianBlur stdDeviation="12"/></filter>
<filter id="cb16" x="-40%" y="-70%" width="180%" height="240%"><feGaussianBlur stdDeviation="22"/></filter>
<clipPath id="bodyclip"><path d="M1058.2 1038.6 L1067.3 1026.6 L1065.5 974.9 L1063.3 924.0 L1071.0 887.6 L1085.5 849.4 L1105.5 823.9 L1131.0 805.7 L1171.0 785.7 L1218.4 772.2 L1291.1 760.9 L1363.9 751.8 L1378.3 748.0 L1434.9 699.1 L1491.5 658.9 L1548.1 624.9 L1604.8 600.9 L1661.4 586.7 L1718.0 580.5 L1774.6 577.6 L1817.0 571.7 L1916.1 570.6 L2001.0 576.2 L2000.0 577.0 L2076.4 586.9 L2141.5 599.6 L2198.1 613.8 L2268.9 632.2 L2339.7 659.1 L2424.6 687.9 L2481.2 710.0 L2537.8 735.5 L2594.4 755.3 L2628.4 762.4 L2631.8 775.1 L2630.1 814.8 L2623.3 843.1 L2619.9 871.4 L2623.3 899.7 L2645.4 928.0 L2649.9 939.3 L2650.9 945.6 L2643.6 963.8 L2642.5 1003.8 L2637.0 1051.1 L2623.2 1060.6 L2618.8 1067.5 L2564.3 1078.4 L2491.5 1085.7 L2382.3 1096.6 L2291.3 1106.4 L2163.9 1108.6 L2054.8 1102.1 L2046.7 1103.1 L2011.4 1086.6 L2008.5 1100.2 L1728.3 1100.2 L1730.0 1101.3 L1681.0 1094.2 L1596.1 1084.3 L1454.6 1075.8 L1290.4 1063.1 L1248.0 1058.8 L1245.1 1046.1 L1086.6 1046.6 L1056.9 1039.6 L1058.3 1036.2Z"/></clipPath>
</defs><rect x="796" y="287" width="2076" height="1186" fill="url(#bgc)"/><rect x="796" y="287" width="2076" height="1186" fill="url(#vig)"/><path d="M2287.7 1096.6 C2269.5 1104.5 2299.8 1112.4 2309.5 1120.3 C2319.2 1128.1 2331.3 1138.2 2345.9 1143.9 C2360.5 1149.7 2378.6 1154.8 2396.8 1154.8 C2415.0 1154.8 2436.3 1150.6 2455.1 1143.9 C2473.9 1137.2 2495.1 1124.8 2509.7 1114.8 C2524.2 1104.8 2557.6 1090.8 2542.4 1083.9 C2527.3 1076.9 2461.1 1070.8 2418.7 1072.9 C2376.2 1075.1 2305.9 1088.7 2287.7 1096.6Z" fill="#141414" /><path d="M2309.5 1098.4 C2315.6 1101.8 2333.8 1114.3 2345.9 1118.4 C2358.0 1122.6 2370.2 1124.2 2382.3 1123.2 C2394.4 1122.1 2409.9 1117.0 2418.7 1112.3 C2427.5 1107.5 2432.3 1097.7 2435.1 1094.8" fill="none" stroke="#555" stroke-width="3" /><path d="M2318.6 1096.6 C2323.8 1099.0 2338.9 1108.1 2349.5 1111.2 C2360.1 1114.2 2371.4 1115.8 2382.3 1114.8 C2393.2 1113.8 2407.8 1108.6 2415.0 1105.0 C2422.3 1101.3 2424.1 1095.0 2426.0 1093.0" fill="none" stroke="#333" stroke-width="5" /><ellipse cx="1152.8" cy="985.2" rx="75.3" ry="138.7" fill="#121212" /><ellipse cx="1158.5" cy="985.6" rx="74.8" ry="138.1" fill="#121212" /><ellipse cx="1164.1" cy="986.0" rx="74.3" ry="137.5" fill="#121212" /><ellipse cx="1169.8" cy="986.4" rx="73.7" ry="136.8" fill="#121212" /><ellipse cx="1175.4" cy="986.9" rx="73.2" ry="136.2" fill="#121212" /><ellipse cx="1181.1" cy="987.3" rx="72.7" ry="135.6" fill="#121212" /><ellipse cx="1186.7" cy="987.7" rx="72.2" ry="135.0" fill="#121212" /><ellipse cx="1192.4" cy="988.1" rx="71.7" ry="134.3" fill="#121212" /><ellipse cx="1198.1" cy="988.5" rx="71.1" ry="133.7" fill="#121212" /><ellipse cx="1203.7" cy="988.9" rx="70.6" ry="133.1" fill="#121212" /><ellipse cx="1209.4" cy="989.3" rx="70.1" ry="132.5" fill="#121212" /><ellipse cx="1215.0" cy="989.8" rx="69.6" ry="131.9" fill="#121212" /><ellipse cx="1220.7" cy="990.2" rx="69.0" ry="131.2" fill="#121212" /><ellipse cx="1226.3" cy="990.6" rx="68.5" ry="130.6" fill="#121212" /><ellipse cx="1232.0" cy="991.0" rx="68.0" ry="130.0" fill="#121212" /><ellipse cx="1841.5" cy="1022.4" rx="118.3" ry="174.0" fill="#121212" /><ellipse cx="1848.4" cy="1022.8" rx="117.7" ry="173.1" fill="#121212" /><ellipse cx="1855.3" cy="1023.2" rx="117.1" ry="172.1" fill="#121212" /><ellipse cx="1862.2" cy="1023.6" rx="116.5" ry="171.2" fill="#121212" /><ellipse cx="1869.1" cy="1024.0" rx="115.9" ry="170.3" fill="#121212" /><ellipse cx="1876.0" cy="1024.4" rx="115.3" ry="169.4" fill="#121212" /><ellipse cx="1882.9" cy="1024.8" rx="114.7" ry="168.4" fill="#121212" /><ellipse cx="1889.8" cy="1025.2" rx="114.2" ry="167.5" fill="#121212" /><ellipse cx="1896.6" cy="1025.6" rx="113.6" ry="166.6" fill="#121212" /><ellipse cx="1903.5" cy="1026.0" rx="113.0" ry="165.6" fill="#121212" /><ellipse cx="1910.4" cy="1026.4" rx="112.4" ry="164.7" fill="#121212" /><ellipse cx="1917.3" cy="1026.8" rx="111.8" ry="163.8" fill="#121212" /><ellipse cx="1924.2" cy="1027.2" rx="111.2" ry="162.9" fill="#121212" /><ellipse cx="1931.1" cy="1027.6" rx="110.6" ry="161.9" fill="#121212" /><ellipse cx="1938.0" cy="1028.0" rx="110.0" ry="161.0" fill="#121212" /><polygon points="2074.2,587.5 2110.4,571.9 2132.5,567.6 2133.0,588.3 2138.1,599.1 2107.6,593.4" fill="#0b0b0b" /><g filter="url(#desat)"><path d="M1058.2 1038.6 L1067.3 1026.6 L1065.5 974.9 L1063.3 924.0 L1071.0 887.6 L1085.5 849.4 L1105.5 823.9 L1131.0 805.7 L1171.0 785.7 L1218.4 772.2 L1291.1 760.9 L1363.9 751.8 L1378.3 748.0 L1434.9 699.1 L1491.5 658.9 L1548.1 624.9 L1604.8 600.9 L1661.4 586.7 L1718.0 580.5 L1774.6 577.6 L1817.0 571.7 L1916.1 570.6 L2001.0 576.2 L2000.0 577.0 L2076.4 586.9 L2141.5 599.6 L2198.1 613.8 L2268.9 632.2 L2339.7 659.1 L2424.6 687.9 L2481.2 710.0 L2537.8 735.5 L2594.4 755.3 L2628.4 762.4 L2631.8 775.1 L2630.1 814.8 L2623.3 843.1 L2619.9 871.4 L2623.3 899.7 L2645.4 928.0 L2649.9 939.3 L2650.9 945.6 L2643.6 963.8 L2642.5 1003.8 L2637.0 1051.1 L2623.2 1060.6 L2618.8 1067.5 L2564.3 1078.4 L2491.5 1085.7 L2382.3 1096.6 L2291.3 1106.4 L2163.9 1108.6 L2054.8 1102.1 L2046.7 1103.1 L2011.4 1086.6 L2008.5 1100.2 L1728.3 1100.2 L1730.0 1101.3 L1681.0 1094.2 L1596.1 1084.3 L1454.6 1075.8 L1290.4 1063.1 L1248.0 1058.8 L1245.1 1046.1 L1086.6 1046.6 L1056.9 1039.6 L1058.3 1036.2Z" fill="url(#bodyg)"/><g clip-path="url(#bodyclip)"><path d="M1367.0 755.1 C1443.9 739.7 1513.2 744.7 1576.4 738.1 C1639.7 731.5 1689.7 723.0 1746.3 715.5 C1802.9 707.9 1865.4 695.7 1916.1 692.9 C1966.8 690.0 2008.0 694.2 2050.3 698.5 C2092.6 702.8 2119.2 710.0 2169.8 718.5 C2220.4 727.0 2322.7 741.2 2353.8 749.6 C2385.0 758.1 2387.3 765.9 2356.7 769.5 C2326.0 773.0 2224.6 768.5 2169.8 770.9 C2115.1 773.2 2064.2 775.4 2028.3 783.6 C1992.5 791.8 1995.3 811.1 1954.8 820.0 C1914.2 828.9 1822.4 836.6 1784.9 837.0 C1747.5 837.4 1785.1 824.4 1730.0 822.5 C1674.9 820.5 1538.2 825.3 1454.6 825.3 C1370.9 825.3 1284.8 821.5 1228.1 822.5 C1171.5 823.4 1091.8 842.2 1114.9 831.0 C1138.1 819.7 1290.1 770.6 1367.0 755.1Z" fill="#17264e" filter="url(#cb16)" opacity="0.7"/><path d="M1887.8 709.8 C1925.4 701.8 2004.9 704.3 2056.6 707.2 C2108.3 710.1 2149.1 719.0 2198.1 727.0 C2247.2 735.0 2325.5 748.5 2351.0 755.3 C2376.5 762.1 2381.2 765.7 2351.0 768.0 C2320.8 770.4 2223.6 766.9 2169.8 769.5 C2116.1 772.1 2065.9 784.1 2028.3 783.6 C1990.7 783.1 1977.3 771.2 1944.4 766.4 C1911.6 761.7 1840.6 764.6 1831.2 755.1 C1821.8 745.7 1850.2 717.8 1887.8 709.8Z" fill="#0a1836" filter="url(#cb16)" opacity="0.85"/><path d="M1898.1 820.0 C1917.0 805.4 2011.4 797.4 2068.0 803.0 C2124.6 808.7 2182.5 845.5 2237.8 854.0 C2293.1 862.5 2373.0 847.4 2400.0 854.0 C2427.0 860.6 2445.9 883.7 2400.0 893.6 C2354.1 903.5 2189.4 905.9 2124.6 913.4 C2059.8 921.0 2039.7 942.7 2011.4 938.9 C1983.1 935.1 1973.6 910.6 1954.8 890.8 C1935.9 871.0 1879.3 834.6 1898.1 820.0Z" fill="#2c4479" filter="url(#cb12)" opacity="0.75"/><path d="M1751.9 710.4 C1765.2 707.9 1806.2 698.2 1831.2 695.1 C1856.2 692.0 1873.8 692.3 1902.0 691.7 C1930.1 691.2 1969.5 691.1 2000.0 691.9 C2030.5 692.7 2056.6 693.3 2084.9 696.4 C2113.2 699.5 2136.8 704.9 2169.8 710.6 C2202.9 716.2 2252.4 724.7 2283.1 730.4 C2313.7 736.1 2342.0 742.2 2353.8 744.6" fill="none" stroke="#5c78ac" stroke-width="3" filter="url(#cb2)" opacity="0.7"/><path d="M1689.7 583.0 C1708.5 582.2 1811.9 588.5 1859.5 592.9 C1907.1 597.4 1937.4 601.0 1975.0 609.6 C2012.6 618.3 2052.4 634.3 2084.9 644.9 C2117.4 655.5 2141.5 664.7 2169.8 673.2 C2198.1 681.7 2235.4 689.4 2254.8 695.9 C2274.1 702.3 2295.3 710.1 2285.9 712.0 C2276.5 713.9 2231.6 711.8 2198.1 707.2 C2164.6 702.6 2122.5 692.1 2084.9 684.5 C2047.3 677.0 1996.6 666.5 1972.7 661.7 C1948.8 657.0 1955.7 661.0 1941.6 656.1 C1927.4 651.1 1906.2 639.3 1887.8 632.0 C1869.4 624.7 1854.8 617.8 1831.2 612.2 C1807.6 606.5 1769.9 602.9 1746.3 598.0 C1722.7 593.2 1670.8 583.9 1689.7 583.0Z" fill="#17274f" filter="url(#cb3)"/><path d="M1548.1 627.7 C1557.6 623.9 1585.9 610.7 1604.8 604.5 C1623.6 598.4 1642.5 594.2 1661.4 591.0 C1680.2 587.7 1694.4 586.0 1718.0 585.3 C1741.6 584.6 1774.6 584.1 1802.9 586.7 C1831.2 589.3 1859.5 594.5 1887.8 600.9 C1916.1 607.2 1939.9 615.2 1972.7 624.9 C2005.6 634.6 2052.1 648.7 2084.9 659.1 C2117.8 669.5 2141.5 679.1 2169.8 687.4 C2198.1 695.6 2240.6 705.1 2254.8 708.6" fill="none" stroke="#223664" stroke-width="7" filter="url(#cb3)" opacity="0.9"/><polygon points="2285.9,711.4 2481.2,710.9 2537.8,736.1 2594.4,755.9 2632.6,763.8 2632.6,776.5 2595.8,769.5 2365.1,768.6 2357.2,746.8" fill="url(#deck)" /><path d="M2365.1 768.6 C2403.6 768.8 2551.3 768.1 2595.8 769.5 C2640.4 770.8 2626.5 775.4 2632.6 776.5" fill="none" stroke="#4a5f90" stroke-width="2.5" /><path d="M2005.7 961.5 C2012.8 956.3 2038.7 937.0 2068.0 927.6 C2097.2 918.1 2143.5 911.1 2181.2 904.9 C2218.9 898.8 2253.9 894.9 2294.4 890.8 C2335.0 886.6 2379.3 882.1 2424.6 879.9 C2469.9 877.6 2528.4 876.1 2566.1 877.0 C2603.9 878.0 2636.9 877.0 2651.0 885.5 C2665.2 894.0 2665.2 923.0 2651.0 928.0 C2636.9 932.9 2603.9 915.2 2566.1 915.2 C2528.4 915.2 2474.6 925.0 2424.6 928.0 C2374.6 931.0 2311.4 930.5 2266.1 933.2 C2220.8 936.0 2193.0 940.3 2152.9 944.5 C2112.8 948.8 2050.0 955.9 2025.5 958.7 C2001.0 961.5 1998.6 966.7 2005.7 961.5Z" fill="#04102c" filter="url(#cb8)" opacity="0.95"/><path d="M2039.7 913.4 C2058.5 904.4 2134.0 885.1 2181.2 876.6 C2228.4 868.1 2282.2 866.6 2322.7 862.5 C2363.3 858.3 2372.2 852.9 2424.6 851.5 C2476.9 850.2 2601.5 848.7 2636.9 854.4 C2672.3 860.0 2672.3 880.8 2636.9 885.5 C2601.5 890.2 2481.7 881.3 2424.6 882.7 C2367.5 884.0 2335.0 889.4 2294.4 893.6 C2253.9 897.8 2218.9 901.6 2181.2 907.7 C2143.5 913.9 2091.6 929.4 2068.0 930.4 C2044.4 931.3 2020.8 922.4 2039.7 913.4Z" fill="#0b1a3e" filter="url(#cb16)" opacity="0.7"/><path d="M2011.4 978.5 C2035.0 956.8 2110.4 959.2 2152.9 953.0 C2195.3 946.9 2252.0 937.5 2266.1 941.7 C2280.3 946.0 2266.1 956.3 2237.8 978.5 C2209.5 1000.7 2134.0 1057.3 2096.3 1074.8 C2058.5 1092.2 2025.5 1099.3 2011.4 1083.2 C1997.2 1067.2 1987.8 1000.2 2011.4 978.5Z" fill="#39558c" filter="url(#cb12)" opacity="0.6"/><path d="M2424.6 933.6 C2448.2 928.7 2528.8 921.4 2566.1 920.9 C2603.4 920.4 2634.5 925.9 2648.2 930.8 C2661.9 935.8 2661.9 947.8 2648.2 950.6 C2634.5 953.4 2603.4 947.8 2566.1 947.8 C2528.8 947.8 2448.2 953.0 2424.6 950.6 C2401.0 948.3 2401.0 938.6 2424.6 933.6Z" fill="#3a5690" filter="url(#cb8)" opacity="0.8"/><path d="M1245.1 1020.6 C1307.9 1014.7 1543.6 1014.0 1624.4 1016.4 C1705.2 1018.7 1712.4 1022.2 1730.0 1034.8 C1747.6 1047.3 1775.9 1086.2 1730.0 1091.4 C1684.1 1096.6 1534.9 1072.5 1454.6 1065.9 C1374.2 1059.3 1282.9 1059.3 1248.0 1051.7 C1213.0 1044.2 1182.4 1026.5 1245.1 1020.6Z" fill="#3e5a90" filter="url(#cb8)" opacity="0.6"/><polygon points="1270.6,1060.8 1454.6,1067.3 1666.9,1076.4 1709.3,1088.5 1730.0,1097.0 1730.0,1102.7 1596.1,1085.1 1454.6,1076.6 1290.4,1063.9" fill="#1f2f58" /><path d="M1109.2 822.1 C1115.2 813.3 1175.9 787.8 1218.4 776.6 C1260.8 765.3 1342.7 750.8 1363.9 754.7 C1385.2 758.7 1376.1 787.8 1345.7 800.2 C1315.4 812.7 1221.4 825.7 1182.0 829.3 C1142.5 833.0 1103.1 830.9 1109.2 822.1Z" fill="#263a68" filter="url(#cb16)" opacity="0.4"/><path d="M1069.6 978.1 C1070.6 967.3 1071.8 931.4 1075.3 913.0 C1078.8 894.6 1083.8 880.7 1090.9 867.7 C1097.9 854.8 1108.1 842.0 1117.7 835.2 C1127.4 828.4 1138.5 826.5 1148.9 826.7 C1159.3 826.9 1170.8 829.8 1180.0 836.6 C1189.2 843.5 1196.5 854.1 1204.1 867.7 C1211.6 881.4 1221.8 910.2 1225.3 918.7" fill="none" stroke="#4165a6" stroke-width="9" filter="url(#cb2)"/><path d="M1717.5 1018.1 C1718.5 1006.3 1719.2 968.8 1723.2 947.4 C1727.3 925.9 1733.0 906.2 1741.9 889.3 C1750.8 872.5 1763.8 856.7 1776.4 846.0 C1789.0 835.4 1803.6 829.2 1817.5 825.7 C1831.4 822.2 1846.0 822.3 1859.9 825.1 C1873.8 827.9 1887.8 833.5 1901.0 842.6 C1914.2 851.8 1927.2 863.7 1939.2 880.0 C1951.2 896.3 1967.5 930.3 1973.2 940.3" fill="none" stroke="#4165a6" stroke-width="10" filter="url(#cb2)" opacity="0.9"/><path d="M1073.0 995.1 C1072.9 992.3 1071.4 992.8 1072.5 978.1 C1073.5 963.5 1075.8 926.2 1079.5 907.4 C1083.3 888.5 1088.3 876.7 1095.1 864.9 C1101.9 853.1 1111.6 842.4 1120.6 836.6 C1129.5 830.9 1139.4 829.7 1148.9 830.4 C1158.3 831.1 1168.7 834.2 1177.2 840.9 C1185.7 847.6 1192.3 857.1 1199.8 870.6 C1207.4 884.0 1216.3 904.5 1222.5 921.5 C1228.6 938.5 1232.9 953.6 1236.6 972.5 C1240.4 991.3 1243.7 1024.4 1245.1 1034.8 L1245.1 1091.4 L1074.7 1091.4 Z" fill="#0d0d0d"/><path d="M1722.1 1046.4 C1721.9 1042.7 1720.4 1040.3 1721.2 1023.8 C1722.0 1007.3 1722.9 969.5 1726.9 947.4 C1730.9 925.2 1736.6 907.3 1745.3 890.8 C1754.0 874.3 1767.0 858.6 1779.3 848.3 C1791.5 838.0 1805.7 832.4 1818.9 829.1 C1832.1 825.8 1845.3 825.8 1858.5 828.5 C1871.7 831.2 1885.4 836.5 1898.1 845.5 C1910.9 854.4 1923.1 866.2 1934.9 882.3 C1946.7 898.3 1959.0 920.0 1968.9 941.7 C1978.8 963.4 1987.7 990.3 1994.4 1012.5 C2001.1 1034.7 2006.6 1064.4 2009.1 1074.8 L2011.4 1131.4 L1723.2 1131.4 Z" fill="#0d0d0d"/><polygon points="1056.9,921.5 1065.7,918.7 1066.8,1000.8 1060.6,998.0" fill="#141414" /></g></g><path d="M1689.7 583.0 C1670.8 580.8 1725.1 581.2 1746.3 579.3 C1767.5 577.5 1788.7 573.4 1817.0 572.0 C1845.3 570.6 1885.4 570.1 1916.1 570.9 C1946.8 571.6 1987.1 575.4 2001.0 576.5 C2015.0 577.6 1987.4 575.5 2000.0 577.3 C2012.6 579.0 2052.8 583.4 2076.4 587.2 C2100.0 590.9 2121.2 595.4 2141.5 599.9 C2161.8 604.4 2176.9 608.6 2198.1 614.1 C2219.4 619.5 2245.3 624.9 2268.9 632.5 C2292.5 640.0 2313.7 650.1 2339.7 659.4 C2365.6 668.6 2401.0 679.7 2424.6 688.2 C2448.2 696.7 2481.2 706.7 2481.2 710.3 C2481.2 713.9 2443.5 710.5 2424.6 710.0 C2405.7 709.5 2393.9 710.2 2368.0 707.2 C2342.0 704.2 2306.6 700.6 2268.9 692.2 C2231.2 683.8 2186.3 668.6 2141.5 656.8 C2096.7 645.0 2027.8 629.0 2000.0 621.1 C1972.2 613.2 1998.4 614.1 1975.0 609.3 C1951.6 604.6 1907.1 597.0 1859.5 592.6 C1811.9 588.3 1708.5 585.2 1689.7 583.0Z" fill="#1a1a1a" /><path d="M2062.3 620.9 C2063.2 616.4 2114.2 616.4 2141.5 618.0 C2168.9 619.7 2193.4 622.5 2226.4 630.8 C2259.5 639.0 2301.9 655.5 2339.7 667.6 C2377.4 679.6 2448.2 697.3 2452.9 702.9 C2457.6 708.6 2396.3 703.7 2368.0 701.5 C2339.7 699.4 2311.4 695.2 2283.1 690.2 C2254.8 685.3 2222.7 679.4 2198.1 671.8 C2173.6 664.3 2158.5 653.4 2135.9 644.9 C2113.2 636.4 2061.3 625.3 2062.3 620.9Z" fill="#2e2e2e" /><path d="M2000.0 602.5 C2014.2 602.4 2056.6 600.2 2084.9 601.9 C2113.2 603.5 2139.2 607.0 2169.8 612.4 C2200.5 617.7 2252.4 630.5 2268.9 634.2" fill="none" stroke="#080808" stroke-width="5" /><polygon points="2192.5,654.8 2254.8,672.7 2268.9,689.6 2198.1,665.3" fill="#646464" /><polygon points="2138.7,646.3 2172.7,657.1 2181.2,665.3 2147.2,654.8" fill="#555" /><path d="M1967.1 609.9 C1980.9 608.4 2036.4 602.4 2050.3 600.9" fill="none" stroke="#454545" stroke-width="2.5" /><path d="M1432.1 745.5 C1427.8 739.1 1430.2 715.3 1437.7 704.2 C1445.3 693.0 1459.0 690.0 1477.4 678.7 C1495.8 667.4 1526.9 646.9 1548.1 636.2 C1569.4 625.6 1585.9 620.7 1604.8 615.0 C1623.6 609.3 1642.5 605.1 1661.4 602.3 C1680.2 599.4 1699.1 598.3 1718.0 598.0 C1736.8 597.8 1755.7 598.3 1774.6 600.9 C1793.5 603.5 1812.3 608.2 1831.2 613.6 C1850.1 619.0 1869.3 626.1 1887.8 633.4 C1906.3 640.7 1939.8 650.9 1942.2 657.5 C1944.5 664.1 1920.5 667.1 1902.0 673.0 C1883.5 679.0 1856.2 687.0 1831.2 693.1 C1806.2 699.3 1773.2 704.9 1751.9 710.1 C1730.7 715.3 1733.1 720.0 1703.8 724.3 C1674.6 728.5 1616.5 732.5 1576.4 735.6 C1536.3 738.7 1487.3 741.0 1463.2 742.7 C1439.2 744.3 1436.3 751.9 1432.1 745.5Z" fill="#0a0a0a" /><path d="M1483.0 687.2 C1493.9 680.2 1527.9 655.9 1548.1 645.3 C1568.4 634.7 1585.9 629.4 1604.8 623.8 C1623.6 618.1 1642.5 614.1 1661.4 611.3 C1680.2 608.6 1699.1 607.6 1718.0 607.4 C1736.8 607.2 1765.2 609.7 1774.6 610.2" fill="none" stroke="#1e1e1e" stroke-width="9" /><polygon points="1464.6,741.5 1477.4,709.8 1519.8,678.7 1576.4,649.0 1621.7,633.4 1661.4,624.9 1718.0,622.1 1783.1,623.8 1718.0,720.0 1684.0,725.4 1576.4,734.7" fill="#7b7b7b" /><polygon points="1802.9,633.4 1822.7,635.1 1812.8,691.4 1751.9,705.6" fill="#7e7e7e" /><polygon points="1616.1,634.8 1661.4,620.7 1785.9,620.7 1766.1,649.0 1726.5,647.6 1689.7,649.0 1684.0,639.1 1644.4,638.5" fill="#161616" /><path d="M1672.7 657.5 C1672.9 654.8 1674.1 651.5 1688.3 651.2 C1702.4 651.0 1747.7 651.6 1757.6 656.1 C1767.5 660.5 1757.8 674.7 1747.7 678.1 C1737.6 681.5 1706.9 678.2 1696.7 676.4 C1686.6 674.6 1690.8 670.5 1686.8 667.4 C1682.8 664.2 1672.4 660.2 1672.7 657.5Z" fill="none" stroke="#101010" stroke-width="2.200"/><path d="M1471.7 741.5 C1459.9 739.3 1492.9 726.4 1505.7 721.7 C1518.4 717.0 1536.3 715.1 1548.1 713.2 C1559.9 711.3 1568.4 712.6 1576.4 710.4 C1584.5 708.2 1588.7 702.4 1596.3 700.2 C1603.8 698.0 1612.8 696.6 1621.7 697.4 C1630.7 698.1 1640.1 700.0 1650.0 704.7 C1659.9 709.5 1693.4 720.6 1681.2 725.7 C1668.9 730.8 1611.4 732.7 1576.4 735.3 C1541.5 738.0 1483.5 743.8 1471.7 741.5Z" fill="#111" /><polygon points="1534.0,735.3 1553.8,721.7 1621.7,716.1 1635.9,728.8" fill="#2c2c2c" /><path d="M1570.8 734.7 C1572.7 731.1 1576.4 718.2 1582.1 712.7 C1587.8 707.1 1596.3 703.1 1604.8 701.3 C1613.2 699.5 1623.6 699.5 1633.1 701.9 C1642.5 704.3 1653.8 711.6 1661.4 715.5 C1668.9 719.4 1675.5 723.8 1678.3 725.4" fill="none" stroke="#0c0c0c" stroke-width="6" /><path d="M1378.3 721.2 C1378.3 715.9 1383.0 709.4 1386.8 704.2 C1390.6 699.0 1394.8 693.3 1401.0 690.0 C1407.1 686.8 1417.8 685.1 1423.6 684.6 C1429.4 684.2 1433.3 683.0 1435.5 687.2 C1437.7 691.4 1437.1 700.1 1436.6 709.8 C1436.1 719.6 1437.7 739.7 1432.7 745.5 C1427.7 751.3 1414.3 746.0 1406.6 744.4 C1399.0 742.8 1391.5 739.7 1386.8 735.9 C1382.1 732.0 1378.3 726.4 1378.3 721.2Z" fill="#0b0b0b" /><path d="M1393.0 721.2 C1393.5 716.4 1395.0 707.2 1398.7 701.9 C1402.4 696.6 1409.6 691.5 1415.1 689.2 C1420.6 686.9 1428.5 684.6 1431.5 688.0 C1434.5 691.5 1433.3 700.9 1432.9 709.8 C1432.6 718.8 1433.4 736.9 1429.5 741.8 C1425.7 746.8 1415.6 741.5 1410.0 739.6 C1404.4 737.6 1398.7 733.3 1395.9 730.2 C1393.0 727.1 1392.6 725.9 1393.0 721.2Z" fill="#808080" /><path d="M1377.5 721.2 C1377.4 716.1 1383.2 708.5 1385.7 704.7 C1388.2 701.0 1392.0 695.8 1392.5 698.5 C1392.9 701.2 1388.4 715.0 1388.2 721.2 C1388.0 727.3 1391.4 733.0 1391.0 735.3 C1390.7 737.7 1388.5 737.7 1386.2 735.3 C1384.0 733.0 1377.6 726.3 1377.5 721.2Z" fill="#5a76ad" /><polygon points="1377.7,718.3 1381.7,716.9 1383.4,729.1 1379.4,729.1" fill="#bdbdbd" /><polygon points="1223.3,837.5 1311.6,833.2 1312.5,860.4 1242.3,859.5 1232.4,850.8" fill="#0c0c0c" /><polygon points="1233.8,840.9 1262.1,840.0 1260.7,852.2 1242.3,852.2" fill="#1e1e1e" /><rect x="1593.3" y="797.5" width="51" height="16" rx="7.500" fill="none" stroke="#16244a" stroke-width="1.300"/><path d="M1363.9 752.9 C1357.9 760.2 1336.0 780.8 1327.5 796.6 C1319.0 812.4 1314.8 826.9 1313.0 847.5 C1311.2 868.2 1312.7 893.0 1316.6 920.3 C1320.6 947.6 1333.3 996.1 1336.6 1011.3" fill="none" stroke="#1a2a54" stroke-width="1.2" /><path d="M1706.0 725.6 C1702.4 739.9 1692.7 775.7 1684.2 811.1 C1675.7 846.6 1662.4 908.2 1655.1 938.5 C1647.8 968.8 1649.6 981.3 1640.5 993.1 C1631.4 1004.9 1607.2 1006.8 1600.5 1009.5" fill="none" stroke="#4a6296" stroke-width="1.2" /><path d="M1242.3 1013.5 C1273.0 1013.4 1365.0 1013.1 1426.3 1012.7 C1487.6 1012.2 1574.9 1012.7 1610.3 1010.7 C1645.6 1008.7 1630.6 1006.2 1638.6 1000.8 C1646.6 995.4 1655.3 989.2 1658.4 978.1 C1661.5 967.1 1657.2 941.6 1657.0 934.3" fill="none" stroke="#15203c" stroke-width="1.6" /><path d="M1657.0 934.3 C1669.1 934.0 1717.8 933.1 1730.0 932.9" fill="none" stroke="#7088b8" stroke-width="1.2" /><ellipse cx="1152.8" cy="985.2" rx="75.3" ry="138.7" fill="#171717" /><ellipse cx="1151.0" cy="985.2" rx="66.0" ry="124.0" fill="#1f1f1f" /><ellipse cx="1146.0" cy="987.2" rx="60.0" ry="112.6" fill="#5e5e5e" /><polygon points="1164.8,986.1 1202.1,969.3 1202.4,1000.6 1169.8,990.1" fill="#707070" /><polygon points="1169.8,990.1 1202.4,1000.6 1197.9,1030.7 1164.5,990.8" fill="#525252" /><polygon points="1186.6,912.7 1201.5,963.9 1174.7,970.1 1170.4,966.5 1170.9,957.2" fill="#232323" /><polygon points="1186.6,912.7 1195.0,933.1 1177.9,953.8 1170.9,957.2" fill="#0c0c0c" /><polygon points="1200.7,995.6 1200.1,1004.3 1181.0,993.7" fill="#2e2e2e" /><path d="M1157.6 969.5 L1186.1 909.6" stroke="#959595" stroke-width="2.600" fill="none"/><path d="M1162.7 987.2 L1202.6 966.3" stroke="#959595" stroke-width="2.600" fill="none"/><polygon points="1156.2,1007.2 1172.7,1080.8 1156.9,1091.1 1155.3,1019.0" fill="#707070" /><polygon points="1155.3,1019.0 1156.9,1091.1 1140.3,1092.3 1153.8,1008.0" fill="#525252" /><polygon points="1196.6,1035.7 1175.3,1078.1 1166.3,1023.5 1167.1,1013.7 1171.7,1012.7" fill="#232323" /><polygon points="1196.6,1035.7 1188.8,1057.0 1175.0,1026.4 1171.7,1012.7" fill="#0c0c0c" /><polygon points="1159.1,1085.7 1154.5,1087.3 1155.8,1043.8" fill="#2e2e2e" /><path d="M1162.6 988.4 L1197.9 1034.0" stroke="#959595" stroke-width="2.600" fill="none"/><path d="M1155.2 1003.1 L1174.3 1081.0" stroke="#959595" stroke-width="2.600" fill="none"/><polygon points="1142.9,998.4 1107.1,1062.8 1097.0,1037.8 1136.2,1002.0" fill="#707070" /><polygon points="1136.2,1002.0 1097.0,1037.8 1091.3,1008.4 1141.7,994.3" fill="#525252" /><polygon points="1137.3,1091.5 1109.2,1066.5 1136.7,1025.1 1142.2,1022.6 1143.8,1031.4" fill="#232323" /><polygon points="1137.3,1091.5 1124.2,1084.3 1137.3,1043.6 1143.8,1031.4" fill="#0c0c0c" /><polygon points="1100.6,1039.4 1098.4,1031.7 1122.7,1014.3" fill="#2e2e2e" /><path d="M1154.6 1003.3 L1138.6 1093.6" stroke="#959595" stroke-width="2.600" fill="none"/><path d="M1144.9 994.7 L1107.4 1065.9" stroke="#959595" stroke-width="2.600" fill="none"/><polygon points="1143.3,971.9 1096.0,940.1 1105.5,914.4 1138.9,962.6" fill="#707070" /><polygon points="1138.9,962.6 1105.5,914.4 1118.6,895.1 1145.0,968.5" fill="#525252" /><polygon points="1090.8,1003.0 1094.7,945.1 1126.7,972.7 1130.0,980.7 1125.7,987.4" fill="#232323" /><polygon points="1090.8,1003.0 1090.4,977.2 1116.9,981.6 1125.7,987.4" fill="#0c0c0c" /><polygon points="1106.0,920.7 1109.2,914.3 1127.4,946.0" fill="#2e2e2e" /><path d="M1144.6 993.6 L1090.0 1006.1" stroke="#959595" stroke-width="2.600" fill="none"/><path d="M1145.9 973.6 L1094.4 941.9" stroke="#959595" stroke-width="2.600" fill="none"/><polygon points="1156.8,964.4 1154.7,882.4 1170.7,891.4 1159.7,955.3" fill="#707070" /><polygon points="1159.7,955.3 1170.7,891.4 1184.5,908.9 1159.0,966.4" fill="#525252" /><polygon points="1121.2,892.5 1151.8,881.7 1150.2,938.8 1147.4,946.1 1142.5,941.5" fill="#232323" /><polygon points="1121.2,892.5 1134.2,883.8 1142.0,926.1 1142.5,941.5" fill="#0c0c0c" /><polygon points="1167.8,893.6 1172.1,897.4 1163.4,933.3" fill="#2e2e2e" /><path d="M1146.4 972.7 L1119.4 892.3" stroke="#959595" stroke-width="2.600" fill="none"/><path d="M1156.9 969.0 L1153.2 880.3" stroke="#959595" stroke-width="2.600" fill="none"/><ellipse cx="1146.0" cy="987.2" rx="60.0" ry="112.6" fill="none" stroke="#8a8a8a" stroke-width="2.600"/><ellipse cx="1146.0" cy="987.2" rx="57.3" ry="107.5" fill="none" stroke="#3c3c3c" stroke-width="1.600"/><ellipse cx="1154.5" cy="985.2" rx="12.0" ry="19.7" fill="#6c6c6c" /><ellipse cx="1162.5" cy="987.0" rx="2.5" ry="3.0" fill="#b0b0b0" /><ellipse cx="1156.0" cy="998.5" rx="2.5" ry="3.0" fill="#b0b0b0" /><ellipse cx="1147.4" cy="991.7" rx="2.5" ry="3.0" fill="#b0b0b0" /><ellipse cx="1148.6" cy="975.9" rx="2.5" ry="3.0" fill="#b0b0b0" /><ellipse cx="1158.0" cy="973.0" rx="2.5" ry="3.0" fill="#b0b0b0" /><ellipse cx="1154.5" cy="985.2" rx="5.1" ry="7.9" fill="#c4c4c4" /><ellipse cx="1154.5" cy="985.2" rx="4.1" ry="6.3" fill="#b23030" /><polygon points="1192.8,949.8 1197.0,949.3 1200.7,975.3 1197.6,977.6" fill="#c82626" /><ellipse cx="1841.5" cy="1022.4" rx="118.3" ry="174.0" fill="#171717" /><ellipse cx="1839.0" cy="1022.0" rx="106.0" ry="158.0" fill="#1f1f1f" /><ellipse cx="1837.3" cy="1021.5" rx="97.6" ry="145.0" fill="#5e5e5e" /><polygon points="1871.4,1022.9 1929.8,1009.3 1928.2,1049.6 1878.8,1029.1" fill="#707070" /><polygon points="1878.8,1029.1 1928.2,1049.6 1918.7,1087.3 1870.6,1028.8" fill="#525252" /><polygon points="1908.6,933.7 1929.2,1002.3 1887.6,1004.5 1881.2,998.9 1882.3,987.1" fill="#232323" /><polygon points="1908.6,933.7 1920.8,961.5 1893.4,984.3 1882.3,987.1" fill="#0c0c0c" /><polygon points="1925.8,1042.7 1924.2,1053.8 1895.8,1036.1" fill="#2e2e2e" /><path d="M1861.0 1000.1 L1907.9 929.5" stroke="#959595" stroke-width="2.600" fill="none"/><path d="M1868.1 1023.8 L1930.7 1005.6" stroke="#959595" stroke-width="2.600" fill="none"/><polygon points="1856.1,1048.3 1874.3,1146.8 1848.1,1156.9 1853.3,1063.4" fill="#707070" /><polygon points="1853.3,1063.4 1848.1,1156.9 1821.0,1155.2 1852.0,1048.9" fill="#525252" /><polygon points="1916.3,1093.5 1878.7,1143.8 1870.3,1071.4 1872.6,1059.0 1879.9,1058.6" fill="#232323" /><polygon points="1916.3,1093.5 1902.2,1119.3 1883.6,1076.9 1879.9,1058.6" fill="#0c0c0c" /><polygon points="1852.2,1150.3 1844.6,1151.5 1851.5,1095.5" fill="#2e2e2e" /><path d="M1867.9 1025.4 L1918.5 1091.6" stroke="#959595" stroke-width="2.600" fill="none"/><path d="M1854.9 1042.8 L1876.9 1147.4" stroke="#959595" stroke-width="2.600" fill="none"/><polygon points="1835.1,1034.4 1769.2,1110.9 1754.6,1077.0 1823.4,1037.8" fill="#707070" /><polygon points="1823.4,1037.8 1754.6,1077.0 1747.4,1038.1 1833.5,1028.9" fill="#525252" /><polygon points="1816.3,1153.7 1772.5,1116.2 1822.2,1067.7 1831.5,1065.5 1833.3,1077.2" fill="#232323" /><polygon points="1816.3,1153.7 1795.4,1141.8 1821.3,1091.7 1833.3,1077.2" fill="#0c0c0c" /><polygon points="1760.6,1079.7 1757.4,1069.3 1799.8,1051.3" fill="#2e2e2e" /><path d="M1853.9 1043.0 L1818.1 1156.6" stroke="#959595" stroke-width="2.600" fill="none"/><path d="M1838.7 1030.0 L1769.5 1115.1" stroke="#959595" stroke-width="2.600" fill="none"/><polygon points="1837.5,1000.5 1759.7,951.3 1776.9,920.2 1830.6,987.8" fill="#707070" /><polygon points="1830.6,987.8 1776.9,920.2 1799.5,897.9 1840.5,996.5" fill="#525252" /><polygon points="1746.9,1031.0 1757.4,957.5 1809.7,998.6 1814.7,1009.4 1807.0,1017.2" fill="#232323" /><polygon points="1746.9,1031.0 1748.0,997.9 1792.6,1008.2 1807.0,1017.2" fill="#0c0c0c" /><polygon points="1777.5,928.3 1783.2,920.7 1812.1,964.6" fill="#2e2e2e" /><path d="M1838.3 1028.5 L1745.4 1034.8" stroke="#959595" stroke-width="2.600" fill="none"/><path d="M1841.9 1003.1 L1757.0 953.4" stroke="#959595" stroke-width="2.600" fill="none"/><polygon points="1859.9,993.4 1858.9,888.5 1884.2,903.3 1864.8,982.4" fill="#707070" /><polygon points="1864.8,982.4 1884.2,903.3 1905.4,928.3 1863.5,996.4" fill="#525252" /><polygon points="1803.9,895.1 1854.2,887.1 1850.1,959.5 1845.4,968.3 1837.3,961.5" fill="#232323" /><polygon points="1803.9,895.1 1825.5,886.4 1837.1,941.8 1837.3,961.5" fill="#0c0c0c" /><polygon points="1879.6,905.5 1886.3,911.2 1871.5,955.2" fill="#2e2e2e" /><path d="M1842.7 1002.1 L1800.9 894.5" stroke="#959595" stroke-width="2.600" fill="none"/><path d="M1860.1 999.3 L1856.6 885.7" stroke="#959595" stroke-width="2.600" fill="none"/><ellipse cx="1837.3" cy="1021.5" rx="97.6" ry="145.0" fill="none" stroke="#8a8a8a" stroke-width="2.600"/><ellipse cx="1837.3" cy="1021.5" rx="93.2" ry="138.5" fill="none" stroke="#3c3c3c" stroke-width="1.600"/><ellipse cx="1855.7" cy="1019.5" rx="19.5" ry="25.4" fill="#6c6c6c" /><ellipse cx="1868.6" cy="1023.1" rx="2.5" ry="3.0" fill="#b0b0b0" /><ellipse cx="1857.1" cy="1036.8" rx="2.5" ry="3.0" fill="#b0b0b0" /><ellipse cx="1843.7" cy="1026.6" rx="2.5" ry="3.0" fill="#b0b0b0" /><ellipse cx="1846.9" cy="1006.6" rx="2.5" ry="3.0" fill="#b0b0b0" /><ellipse cx="1862.3" cy="1004.4" rx="2.5" ry="3.0" fill="#b0b0b0" /><ellipse cx="1855.7" cy="1019.5" rx="8.3" ry="10.2" fill="#c4c4c4" /><ellipse cx="1855.7" cy="1019.5" rx="6.6" ry="8.1" fill="#b23030" /><polygon points="1810.4,994.1 1824.5,1001.2 1826.8,1015.3 1811.8,1012.5" fill="#c82626" /><polygon points="1820.3,1046.4 1830.8,1043.6 1831.9,1060.6 1824.5,1062.9" fill="#c82626" /><path d="M2087.5 1079.5 C2085.1 1068.5 2142.1 1034.3 2163.9 1018.4 C2185.8 1002.4 2201.5 992.3 2218.5 983.8 C2235.5 975.3 2244.6 972.1 2265.8 967.4 C2287.1 962.7 2314.4 958.3 2345.9 955.4 C2377.4 952.5 2412.6 951.2 2455.1 949.9 C2497.5 948.7 2570.9 946.7 2600.6 947.8 C2630.4 948.8 2626.3 952.3 2633.4 956.5 C2640.5 960.7 2641.9 962.6 2643.2 972.9 C2644.6 983.2 2642.6 1005.0 2641.4 1018.4 C2640.3 1031.7 2639.8 1045.5 2636.3 1052.9 C2632.9 1060.3 2631.5 1061.0 2620.7 1062.8 C2609.9 1064.5 2593.1 1062.1 2571.5 1063.5 C2550.0 1064.9 2525.4 1068.2 2491.5 1071.1 C2457.5 1074.0 2419.9 1078.7 2367.7 1081.0 C2315.6 1083.2 2225.2 1084.8 2178.5 1084.6 C2131.8 1084.4 2089.9 1090.5 2087.5 1079.5Z" fill="#151515" /><path d="M2367.7 1081.0 C2385.9 1074.3 2391.4 1062.5 2400.5 1051.1 C2409.6 1039.8 2415.0 1022.3 2422.3 1012.9 C2429.6 1003.5 2432.6 998.5 2444.2 994.7 C2455.7 990.9 2472.1 991.1 2491.5 990.0 C2510.9 988.8 2546.5 985.5 2560.6 987.8 C2574.7 990.1 2572.3 992.6 2575.9 1003.8 C2579.5 1015.0 2579.2 1043.8 2582.5 1054.8 C2585.7 1065.7 2588.4 1068.3 2595.2 1069.3 C2602.0 1070.3 2619.3 1060.8 2623.2 1060.6 C2627.2 1060.4 2628.7 1065.1 2618.8 1068.2 C2609.0 1071.3 2585.5 1076.1 2564.3 1079.1 C2543.0 1082.2 2521.8 1083.5 2491.5 1086.4 C2461.1 1089.3 2415.6 1095.8 2382.3 1096.6 C2348.9 1097.4 2293.7 1093.8 2291.3 1091.1 C2288.9 1088.5 2349.5 1087.6 2367.7 1081.0Z" fill="#34518b" /><polygon points="2455.1,1018.4 2495.1,1007.4 2484.2,1069.3 2426.0,1072.9" fill="#233a6e" /><path d="M2011.4 1086.1 C2028.8 1085.0 2082.1 1090.1 2124.6 1090.3 C2167.0 1090.6 2225.6 1088.9 2266.1 1087.5 C2306.6 1086.1 2316.8 1086.2 2367.7 1082.0 C2418.6 1077.9 2529.0 1066.3 2571.5 1062.8 C2614.1 1059.2 2615.3 1059.7 2623.2 1060.6 C2631.1 1061.5 2628.7 1065.1 2618.8 1068.2 C2609.0 1071.3 2603.7 1074.3 2564.3 1079.1 C2524.8 1084.0 2427.8 1092.7 2382.3 1097.3 C2336.8 1102.0 2327.7 1105.2 2291.3 1107.2 C2254.9 1109.2 2203.4 1110.1 2163.9 1109.3 C2124.5 1108.6 2078.8 1104.9 2054.8 1102.8 C2030.7 1100.7 2027.1 1099.6 2019.9 1096.8 C2012.6 1094.0 1993.9 1087.2 2011.4 1086.1Z" fill="#3a578f" /><path d="M2019.9 1095.1 C2031.5 1094.9 2083.5 1101.5 2124.6 1103.1 C2165.6 1104.6 2217.1 1106.2 2266.1 1104.2 C2315.1 1102.2 2375.1 1094.8 2418.7 1091.1 C2462.3 1087.5 2527.9 1081.3 2527.9 1082.0 C2527.9 1082.8 2458.1 1091.3 2418.7 1095.9 C2379.3 1100.5 2333.8 1107.2 2291.3 1109.7 C2248.8 1112.2 2203.4 1111.6 2163.9 1110.8 C2124.5 1109.9 2078.8 1107.2 2054.8 1104.6 C2030.7 1102.0 2008.2 1095.4 2019.9 1095.1Z" fill="#161a26" /><polygon points="2171.3,1058.3 2212.3,1019.6 2230.7,1019.0 2198.2,1059.2" fill="#6c6c6c" /><path d="M2233.6 1055.5 C2237.3 1048.2 2250.3 1026.8 2260.5 1020.1 C2270.6 1013.4 2279.8 1016.3 2294.4 1015.3 C2309.0 1014.3 2336.4 1010.6 2348.2 1013.9 C2360.0 1017.2 2364.7 1027.7 2365.2 1035.1 C2365.7 1042.5 2362.8 1054.0 2351.0 1058.3 C2339.2 1062.7 2313.3 1060.2 2294.4 1061.2 C2275.5 1062.1 2248.0 1064.9 2237.8 1064.0 C2227.7 1063.1 2229.8 1062.8 2233.6 1055.5Z" fill="url(#pipe)" /><ellipse cx="2303.5" cy="1036.5" rx="12.5" ry="19.2" fill="#d0d0d0" /><ellipse cx="2304.0" cy="1036.5" rx="9.9" ry="16.1" fill="#080808" /><ellipse cx="2351.0" cy="1034.3" rx="13.0" ry="19.8" fill="#d0d0d0" /><ellipse cx="2351.6" cy="1034.3" rx="10.5" ry="16.7" fill="#080808" /><path d="M2578.8 1004.5 C2587.3 998.1 2624.2 1000.0 2633.4 1006.0 C2642.6 1011.9 2642.6 1033.8 2634.1 1040.2 C2625.6 1046.6 2591.7 1050.5 2582.5 1044.6 C2573.2 1038.6 2570.3 1011.0 2578.8 1004.5Z" fill="url(#pipe)" /><ellipse cx="2609.7" cy="1022.0" rx="10.6" ry="18.2" fill="#cfcfcf" /><ellipse cx="2609.7" cy="1022.0" rx="8.0" ry="15.3" fill="#080808" /><ellipse cx="2628.7" cy="1020.5" rx="10.6" ry="18.2" fill="#cfcfcf" /><ellipse cx="2628.7" cy="1020.5" rx="8.0" ry="15.3" fill="#080808" /><path d="M2000.0 796.4 C2004.2 793.2 2013.7 787.2 2025.5 783.6 C2037.3 780.1 2046.7 777.4 2070.8 775.1 C2094.8 772.9 2134.5 771.1 2169.8 770.0 C2205.2 769.0 2251.6 769.2 2283.1 768.9 C2314.5 768.6 2346.3 766.3 2358.4 768.0 C2370.4 769.8 2358.6 774.6 2355.5 779.7 C2352.4 784.7 2349.4 792.6 2339.7 798.3 C2330.0 804.0 2314.7 811.1 2297.2 813.9 C2279.8 816.7 2250.5 817.0 2234.9 815.3 C2219.4 813.7 2224.1 806.1 2203.8 804.0 C2183.5 801.9 2147.2 803.1 2113.2 802.9 C2079.3 802.6 2018.9 803.7 2000.0 802.6 C1981.1 801.5 1995.8 799.5 2000.0 796.4Z" fill="#170a0c" /><polygon points="2028.3,792.7 2070.8,777.4 2118.9,775.1 2348.2,770.9 2332.6,787.0 2300.0,799.7 2283.1,808.2 2237.8,808.2 2215.1,795.5" fill="#5c1012" /><polygon points="2124.5,774.3 2351.0,770.3 2336.8,785.9 2113.2,787.3" fill="#2a1113" /><polygon points="2133.0,785.9 2144.4,772.9 2148.6,772.9 2137.3,785.9" fill="#4a1c1e" /><polygon points="2143.8,785.9 2155.1,772.9 2159.4,772.9 2148.0,785.9" fill="#4a1c1e" /><polygon points="2154.5,785.9 2165.9,772.9 2170.1,772.9 2158.8,785.9" fill="#4a1c1e" /><polygon points="2165.3,785.9 2176.6,772.9 2180.9,772.9 2169.6,785.9" fill="#4a1c1e" /><polygon points="2176.1,785.9 2187.4,772.9 2191.6,772.9 2180.3,785.9" fill="#4a1c1e" /><polygon points="2186.8,785.9 2198.1,772.9 2202.4,772.9 2191.1,785.9" fill="#4a1c1e" /><polygon points="2197.6,785.9 2208.9,772.9 2213.1,772.9 2201.8,785.9" fill="#4a1c1e" /><polygon points="2208.3,785.9 2219.7,772.9 2223.9,772.9 2212.6,785.9" fill="#4a1c1e" /><polygon points="2219.1,785.9 2230.4,772.9 2234.7,772.9 2223.3,785.9" fill="#4a1c1e" /><polygon points="2229.8,785.9 2241.2,772.9 2245.4,772.9 2234.1,785.9" fill="#4a1c1e" /><polygon points="2240.6,785.9 2251.9,772.9 2256.2,772.9 2244.8,785.9" fill="#4a1c1e" /><polygon points="2251.4,785.9 2262.7,772.9 2266.9,772.9 2255.6,785.9" fill="#4a1c1e" /><polygon points="2262.1,785.9 2273.4,772.9 2277.7,772.9 2266.4,785.9" fill="#4a1c1e" /><polygon points="2272.9,785.9 2284.2,772.9 2288.4,772.9 2277.1,785.9" fill="#4a1c1e" /><polygon points="2283.6,785.9 2294.9,772.9 2299.2,772.9 2287.9,785.9" fill="#4a1c1e" /><polygon points="2294.4,785.9 2305.7,772.9 2309.9,772.9 2298.6,785.9" fill="#4a1c1e" /><polygon points="2305.1,785.9 2316.5,772.9 2320.7,772.9 2309.4,785.9" fill="#4a1c1e" /><polygon points="2315.9,785.9 2327.2,772.9 2331.5,772.9 2320.1,785.9" fill="#4a1c1e" /><polygon points="2326.6,785.9 2338.0,772.9 2342.2,772.9 2330.9,785.9" fill="#4a1c1e" /><path d="M2028.3 793.8 L2198.1 793.8 L2218.0 802.0 L2236.4 809.7 L2283.1 809.7 L2299.5 801.2 L2309.1 795.5 L2334.0 793.0" fill="none" stroke="#ff1c1c" stroke-width="3.800" stroke-linejoin="round"/><polygon points="2595.8,775.1 2631.2,781.1 2629.5,819.6 2614.2,818.7 2600.1,798.3" fill="#2a1012" /><path d="M2601.5 799.2 L2614.2 814.8 L2624.1 815.6 L2625.0 804.8" fill="none" stroke="#ff1c1c" stroke-width="2.800"/><path d="M2398.5 773.4 L2565.0 777.4 L2565.0 830.0 L2398.5 827.8 Z" fill="#7e7630" stroke="#7e7630" stroke-width="3" stroke-linejoin="round"/><text x="2489.7" y="818.1" font-family="Liberation Sans, sans-serif" font-weight="bold" font-size="46" text-anchor="middle" fill="#1f1f22" textLength="87" lengthAdjust="spacingAndGlyphs" transform="rotate(1.200 2489.7 818.1)">HDRLS</text><text x="2244.0" y="840.8" font-family="Liberation Sans, sans-serif" font-weight="bold" font-style="italic" font-size="14" fill="#1e2638" textLength="97" lengthAdjust="spacingAndGlyphs">F-TYPE</text><path d="M2427.4 719.9 C2432.6 720.5 2448.2 722.0 2458.6 723.6 C2468.9 725.3 2484.5 728.8 2489.7 729.8" fill="none" stroke="#232a3c" stroke-width="2.5" /><path d="M2445.8 731.2 C2455.5 732.0 2494.2 734.8 2503.8 735.5" fill="none" stroke="#232a3c" stroke-width="1.5" stroke-dasharray="3 2"/><rect x="2776.500" y="1377" width="75" height="75" rx="4" fill="#474747"/><text x="2814" y="1441" font-family="Liberation Sans, sans-serif" font-weight="bold" font-size="76" text-anchor="middle" fill="#fff">V</text></svg>
<div style="left:751.5px;top:1532.7px;width:2120px;height:46.5px;background:#1e1e1e;"></div>
<svg style="left:757px;top:1536px;" width="32" height="36" viewBox="0 0 32 36"><path d="M26 1 L30.500 3 C28 10 25.500 17 22 23 C18.500 29 11 32.500 2 33 C7 29.500 9.500 25.500 12.500 20.500 C16 14.500 21 7 26 1Z" fill="url(#brg2)"/><rect x="0.500" y="31" width="3.500" height="3.500" fill="#555"/></svg>
<div style="left:794.5px;top:1537px;width:235.5px;height:36px;background:#2a2a2a;border-radius:4px;"></div>
<div style="top:1541.5px;height:30px;line-height:30px;font-size:22px;color:#fff;white-space:pre;left:797.5px;">Move (W)</div>
<svg style="left:1008px;top:1551.25px;" width="14" height="7.5" viewBox="0 0 14 7.5"><path d="M0 0H14 L7.0 7 Z" fill="#d8d8d8"/></svg>
<div style="left:1034px;top:1537px;width:187.5px;height:36px;background:#2a2a2a;border-radius:4px;"></div>
<div style="top:1541.5px;height:30px;line-height:30px;font-size:22px;color:#fff;white-space:pre;left:1037px;">Reflection (D)</div>
<svg style="left:1199.5px;top:1551.25px;" width="14" height="7.5" viewBox="0 0 14 7.5"><path d="M0 0H14 L7.0 7 Z" fill="#d8d8d8"/></svg>
<div style="top:1541.5px;height:30px;line-height:30px;font-size:22px;color:#4a4a4a;white-space:pre;left:1877px;">Frame</div>
<div style="left:1939.5px;top:1537.5px;width:76.5px;height:35px;background:#1c1c1c;border-radius:6px;box-shadow:0 0 0 2px #040404;"></div>
<div style="top:1543px;height:30px;line-height:30px;font-size:22px;color:#4a4a4a;white-space:pre;left:1945px;">0</div>
<div style="left:2040.5px;top:1545px;width:5.5px;height:19px;background:#e4e4e4;"></div>
<div style="left:2050.5px;top:1545px;width:5.5px;height:19px;background:#e4e4e4;"></div>
<div style="left:2080px;top:1535.5px;width:36.5px;height:40px;background:#3c3c3c;border-radius:6px;"></div>
<svg style="left:2082px;top:1539px;" width="33" height="33" viewBox="0 0 33 33"><path d="M6 17A10.500 10.500 0 0 1 24 9.500" fill="none" stroke="#c4c4c4" stroke-width="4.500"/><path d="M19.500 13.500L29 13 27 3.500z" fill="#c4c4c4"/><path d="M27 16A10.500 10.500 0 0 1 9 23.500" fill="none" stroke="#c4c4c4" stroke-width="4.500"/><path d="M13.500 19.500L4 20 6 29.500z" fill="#c4c4c4"/></svg>
<div style="left:2131px;top:1546.5px;width:18px;height:18px;background:#3f3f3f;border-radius:9px;box-shadow:0 0 0 1px #111;"></div>
<div style="left:2155.5px;top:1546.5px;width:18px;height:18px;background:#3f3f3f;border-radius:9px;box-shadow:0 0 0 1px #111;"></div>
<svg style="left:2835px;top:1540px;" width="32" height="32" viewBox="0 0 32 32"><g transform="translate(16 16) scale(1 1)"><path d="M4 4 L13 13" stroke="#4e4e4e" stroke-width="3"/><path d="M14.500 5.500V14.500H5.500z" fill="#4e4e4e"/></g><g transform="translate(16 16) scale(-1 1)"><path d="M4 4 L13 13" stroke="#4e4e4e" stroke-width="3"/><path d="M14.500 5.500V14.500H5.500z" fill="#4e4e4e"/></g><g transform="translate(16 16) scale(1 -1)"><path d="M4 4 L13 13" stroke="#4e4e4e" stroke-width="3"/><path d="M14.500 5.500V14.500H5.500z" fill="#4e4e4e"/></g><g transform="translate(16 16) scale(-1 -1)"><path d="M4 4 L13 13" stroke="#4e4e4e" stroke-width="3"/><path d="M14.500 5.500V14.500H5.500z" fill="#4e4e4e"/></g></svg>
<div style="left:751.5px;top:1589px;width:2120px;height:86px;background:#1e1e1e;"></div>
<div style="top:1596.5px;height:30px;line-height:30px;font-size:22px;color:#fff;white-space:pre;left:1471px;width:600px;text-align:center;">Canvas</div>
<svg style="left:2794.5px;top:1602.5px;" width="20" height="18" viewBox="0 0 20 18"><path d="M5 1H19V9H15" fill="none" stroke="#8e8e8e" stroke-width="2"/><path d="M5 1H19V4.5H5Z" fill="#8e8e8e"/><rect x="1.2" y="8" width="13" height="8.5" fill="none" stroke="#8e8e8e" stroke-width="2"/><rect x="1" y="7" width="13.4" height="3.6" fill="#8e8e8e"/></svg>
<svg style="left:2839px;top:1602.5px;" width="18" height="18" viewBox="0 0 18 18"><path d="M2 2L16 16M16 2L2 16" stroke="#8e8e8e" stroke-width="4" fill="none"/></svg>
<div style="left:2565px;top:1635.5px;width:156.5px;height:35px;background:#2a2a2a;border-radius:4px;"></div>
<div style="top:1639.5px;height:30px;line-height:30px;font-size:22px;color:#fff;white-space:pre;left:2568px;">RGB(A)</div>
<svg style="left:2699.5px;top:1649.25px;" width="14" height="7.5" viewBox="0 0 14 7.5"><path d="M0 0H14 L7.0 7 Z" fill="#d8d8d8"/></svg>
<div style="left:2725.5px;top:1633.5px;width:40px;height:39px;background:#3c3c3c;border-radius:6px;"></div>
<svg style="left:2725.5px;top:1633.5px;" width="40" height="39" viewBox="0 0 40 39"><path d="M33.8 21.9 A14 14 0 0 1 28.6 30.5 L21.0 25.4 Z" fill="#e8e8e8"/><path d="M24.8 32.7 A14 14 0 0 1 14.8 32.5 L15.4 23.3 Z" fill="#e8e8e8"/><path d="M11.0 30.2 A14 14 0 0 1 6.1 21.4 L14.4 17.4 Z" fill="#e8e8e8"/><path d="M6.2 17.1 A14 14 0 0 1 11.4 8.5 L19.0 13.6 Z" fill="#e8e8e8"/><path d="M15.2 6.3 A14 14 0 0 1 25.2 6.5 L24.6 15.7 Z" fill="#e8e8e8"/><path d="M29.0 8.8 A14 14 0 0 1 33.9 17.6 L25.6 21.6 Z" fill="#e8e8e8"/></svg>
<div style="left:2772.5px;top:1634.5px;width:91px;height:37px;background:#0c0c0c;border-radius:5px;box-shadow:0 0 0 1.5px #050505;"></div>
<div style="top:1639px;height:30px;line-height:30px;font-size:22px;color:#fff;white-space:pre;left:2779.5px;">1.0000</div>
<div style="left:751.5px;top:1675px;width:2120px;height:584px;background:#141414;"></div>
<div style="left:751.5px;top:1675px;width:44.5px;height:584px;background:#1e1e1e;"></div>
<div style="left:751.5px;top:1675px;width:44.5px;height:264px;background:#000;"></div>
<div style="left:754px;top:1677px;width:40px;height:40px;background:#6c6d70;"></div>
<svg style="left:754px;top:1677px;" width="40" height="40" viewBox="0 0 40 40"><path d="M30.500 1.500 L36 4 C33.500 12 31 20 27 27 C23 33.500 15 36.500 7 36 C12.500 32 15 27.500 18 22 C22 15 26 8 30.500 1.500Z" fill="url(#brg)" stroke="#3a3a3a" stroke-width="0.800"/><rect x="3.500" y="33.500" width="4.500" height="4.500" fill="#f7941d"/></svg>
<div style="left:754px;top:1721px;width:40px;height:40px;background:#2a2a2a;"></div>
<svg style="left:754px;top:1721px;" width="40" height="40" viewBox="0 0 40 40"><path d="M11 5v26l7-6.500 5.500 11 5-2.500-5.500-10.500 9-.5z" fill="#9a9a9a"/></svg>
<div style="left:754px;top:1765px;width:40px;height:40px;background:#2a2a2a;"></div>
<svg style="left:754px;top:1765px;" width="40" height="40" viewBox="0 0 40 40"><path d="M12 34 C8 28 5 24 4 20 C3.500 17 6.500 16.500 8 19 L11 23 V9.500 C11 6.500 15 6.500 15 9.500 V6 C15 3 19.500 3 19.500 6 V8 C19.500 5 24 5 24 8 V11.500 C24 9 28 9 28 11.500 V24 C28 29 26 31 25 34" fill="none" stroke="#9a9a9a" stroke-width="2.400"/><path d="M15 10V19M19.500 8V19M24 11V19" stroke="#9a9a9a" stroke-width="2"/></svg>
<div style="left:754px;top:1809px;width:40px;height:40px;background:#2a2a2a;"></div>
<svg style="left:754px;top:1809px;" width="40" height="40" viewBox="0 0 40 40"><circle cx="16" cy="16" r="10.500" fill="none" stroke="#9a9a9a" stroke-width="3.200"/><path d="M23.500 24L35 36" stroke="#9a9a9a" stroke-width="5"/></svg>
<div style="left:754px;top:1853px;width:40px;height:40px;background:#2a2a2a;"></div>
<svg style="left:754px;top:1853px;" width="40" height="40" viewBox="0 0 40 40"><rect x="12" y="5" width="23" height="16" fill="none" stroke="#9a9a9a" stroke-width="2.400"/><circle cx="9" cy="26" r="5" fill="none" stroke="#9a9a9a" stroke-width="2"/><path d="M12.500 30L18 36" stroke="#9a9a9a" stroke-width="3"/></svg>
<div style="left:754px;top:1897px;width:40px;height:40px;background:#2a2a2a;"></div>
<svg style="left:754px;top:1897px;" width="40" height="40" viewBox="0 0 40 40"><circle cx="18" cy="18" r="5.500" fill="none" stroke="#9a9a9a" stroke-width="2.400"/><path d="M22 22.500L28 29" stroke="#9a9a9a" stroke-width="3.500"/><g transform="translate(20 20) scale(1 1)"><path d="M10 10L16 16" stroke="#9a9a9a" stroke-width="1.800"/><path d="M17.500 11V17.500H11z" fill="#9a9a9a"/></g><g transform="translate(20 20) scale(-1 1)"><path d="M10 10L16 16" stroke="#9a9a9a" stroke-width="1.800"/><path d="M17.500 11V17.500H11z" fill="#9a9a9a"/></g><g transform="translate(20 20) scale(1 -1)"><path d="M10 10L16 16" stroke="#9a9a9a" stroke-width="1.800"/><path d="M17.500 11V17.500H11z" fill="#9a9a9a"/></g><g transform="translate(20 20) scale(-1 -1)"><path d="M10 10L16 16" stroke="#9a9a9a" stroke-width="1.800"/><path d="M17.500 11V17.500H11z" fill="#9a9a9a"/></g></svg>
<div style="left:1250px;top:1675px;width:1168px;height:584px;background:linear-gradient(#000 0%,#000 10%,#2c2c2c 25%,#535353 38%,#7b7b7b 52%,#969696 70%,#a2a2a2 85%,#a7a7a7 100%);"></div>
<div style="left:1828px;top:1961.5px;width:11px;height:11px;background:#ff4a4a;border-radius:6px;"></div>
<div style="left:751.5px;top:2259px;width:2120px;height:45px;background:#1e1e1e;"></div>
<svg style="left:757px;top:2262px;" width="32" height="36" viewBox="0 0 32 36"><path d="M26 1 L30.500 3 C28 10 25.500 17 22 23 C18.500 29 11 32.500 2 33 C7 29.500 9.500 25.500 12.500 20.500 C16 14.500 21 7 26 1Z" fill="url(#brg2)"/><rect x="0.500" y="31" width="3.500" height="3.500" fill="#555"/></svg>
<div style="left:794.5px;top:2264px;width:235.5px;height:36px;background:#2a2a2a;border-radius:4px;"></div>
<div style="top:2268.5px;height:30px;line-height:30px;font-size:22px;color:#fff;white-space:pre;left:797.5px;">Move (W)</div>
<svg style="left:1008px;top:2278.25px;" width="14" height="7.5" viewBox="0 0 14 7.5"><path d="M0 0H14 L7.0 7 Z" fill="#d8d8d8"/></svg>
<div style="top:2266.5px;height:30px;line-height:30px;font-size:22px;color:#e01010;white-space:pre;left:1691px;">0.005</div>
<div style="top:2266.5px;height:30px;line-height:30px;font-size:22px;color:#108a10;white-space:pre;left:1752px;">0.005</div>
<div style="top:2266.5px;height:30px;line-height:30px;font-size:22px;color:#2e52c8;white-space:pre;left:1813.5px;">0.005</div>
<div style="top:2266.5px;height:30px;line-height:30px;font-size:22px;color:#fff;white-space:pre;left:1876px;">1.000</div>
<div style="left:1934px;top:2265px;width:34px;height:34px;background:#000;"></div>
<div style="top:2266.5px;height:30px;line-height:30px;font-size:22px;color:#fff;white-space:pre;left:1972px;">H:0.000 S:0.000 V:0.005</div>
<div style="left:2871.5px;top:91px;width:10.5px;height:2213px;background:#000;"></div>
<div style="left:2882px;top:91px;width:958px;height:86px;background:#1e1e1e;"></div>
<div style="top:98.5px;height:30px;line-height:30px;font-size:22px;color:#fff;white-space:pre;left:3020px;width:600px;text-align:center;">Light Preview</div>
<svg style="left:3763px;top:104.5px;" width="20" height="18" viewBox="0 0 20 18"><path d="M5 1H19V9H15" fill="none" stroke="#8e8e8e" stroke-width="2"/><path d="M5 1H19V4.5H5Z" fill="#8e8e8e"/><rect x="1.2" y="8" width="13" height="8.5" fill="none" stroke="#8e8e8e" stroke-width="2"/><rect x="1" y="7" width="13.4" height="3.6" fill="#8e8e8e"/></svg>
<svg style="left:3807px;top:104.5px;" width="18" height="18" viewBox="0 0 18 18"><path d="M2 2L16 16M16 2L2 16" stroke="#8e8e8e" stroke-width="4" fill="none"/></svg>
<div style="left:3534px;top:137.5px;width:155px;height:35px;background:#2a2a2a;border-radius:4px;"></div>
<div style="top:141.5px;height:30px;line-height:30px;font-size:22px;color:#fff;white-space:pre;left:3537px;">RGB(A)</div>
<svg style="left:3667px;top:151.25px;" width="14" height="7.5" viewBox="0 0 14 7.5"><path d="M0 0H14 L7.0 7 Z" fill="#d8d8d8"/></svg>
<div style="left:3694px;top:135.5px;width:40px;height:39px;background:#3c3c3c;border-radius:6px;"></div>
<svg style="left:3694px;top:135.5px;" width="40" height="39" viewBox="0 0 40 39"><path d="M33.8 21.9 A14 14 0 0 1 28.6 30.5 L21.0 25.4 Z" fill="#e8e8e8"/><path d="M24.8 32.7 A14 14 0 0 1 14.8 32.5 L15.4 23.3 Z" fill="#e8e8e8"/><path d="M11.0 30.2 A14 14 0 0 1 6.1 21.4 L14.4 17.4 Z" fill="#e8e8e8"/><path d="M6.2 17.1 A14 14 0 0 1 11.4 8.5 L19.0 13.6 Z" fill="#e8e8e8"/><path d="M15.2 6.3 A14 14 0 0 1 25.2 6.5 L24.6 15.7 Z" fill="#e8e8e8"/><path d="M29.0 8.8 A14 14 0 0 1 33.9 17.6 L25.6 21.6 Z" fill="#e8e8e8"/></svg>
<div style="left:3740.5px;top:136.5px;width:90px;height:37px;background:#0c0c0c;border-radius:5px;box-shadow:0 0 0 1.5px #050505;"></div>
<div style="top:141px;height:30px;line-height:30px;font-size:22px;color:#fff;white-space:pre;left:3747.5px;">1.0000</div>
<div style="left:2882px;top:177px;width:958px;height:510px;background:#141414;"></div>
<div style="left:3106px;top:177px;width:510px;height:510px;background:linear-gradient(#000 0%,#000 5%,#0c0c0c 9%,#2c2c2c 16%,#5a5a5a 26.600%,#8c8c8c 40.600%,#a4a4a4 50%,#b4b4b4 60%,#c0c0c0 68.700%,#c9c9c9 82.700%,#d0d0d0 100%);"></div>
<div style="left:3355.5px;top:427px;width:10.5px;height:10.5px;background:#ff4646;border-radius:6px;"></div>
<div style="left:2882px;top:687px;width:958px;height:62px;background:#000;"></div>
<div style="left:2884px;top:709px;width:212px;height:40px;background:#1e1e1e;"></div>
<div style="top:715px;height:30px;line-height:30px;font-size:22px;color:#fff;white-space:pre;left:2914px;">Light Properties</div>
<div style="top:714.5px;height:30px;line-height:30px;font-size:22px;color:#8a8a8a;white-space:pre;left:3130.5px;">Render View Settings</div>
<div style="left:2882px;top:748.5px;width:958px;height:1556px;background:#1e1e1e;"></div>
<div style="top:758px;height:30px;line-height:30px;font-size:22px;color:#fff;white-space:pre;left:3020px;width:600px;text-align:center;">Light Properties</div>
<svg style="left:3763px;top:764px;" width="20" height="18" viewBox="0 0 20 18"><path d="M5 1H19V9H15" fill="none" stroke="#8e8e8e" stroke-width="2"/><path d="M5 1H19V4.5H5Z" fill="#8e8e8e"/><rect x="1.2" y="8" width="13" height="8.5" fill="none" stroke="#8e8e8e" stroke-width="2"/><rect x="1" y="7" width="13.4" height="3.6" fill="#8e8e8e"/></svg>
<svg style="left:3807px;top:764px;" width="18" height="18" viewBox="0 0 18 18"><path d="M2 2L16 16M16 2L2 16" stroke="#8e8e8e" stroke-width="4" fill="none"/></svg>
<div style="top:800.5px;height:30px;line-height:30px;font-size:22px;color:#fff;white-space:pre;left:2662px;width:400px;text-align:right;">Name</div>
<div style="left:3083px;top:797px;width:736px;height:33.5px;background:#0c0c0c;border-radius:8px;box-shadow:0 0 0 1.5px #060606;"></div>
<div style="top:800px;height:30px;line-height:30px;font-size:22px;color:#fff;white-space:pre;left:3088px;letter-spacing:-0.3px;">Gradient Background</div>
<div style="top:846.5px;height:30px;line-height:30px;font-size:22px;color:#fff;white-space:pre;left:2664px;width:400px;text-align:right;">Brightness</div>
<div style="left:3083px;top:838.5px;width:138.5px;height:38px;background:#0c0c0c;border-radius:1px;box-shadow:0 0 0 1.5px #050505;"></div>
<div style="top:845px;height:30px;line-height:30px;font-size:22px;color:#fff;white-space:pre;left:3089px;">50</div>
<div style="left:3227px;top:845.5px;width:25px;height:27px;background:#2e2e2e;border-radius:5px;"></div>
<div style="left:3230.5px;top:857px;width:18px;height:4px;background:#f0f0f0;"></div>
<div style="left:3255px;top:845.5px;width:25px;height:27px;background:#2e2e2e;border-radius:5px;"></div>
<div style="left:3261.5px;top:857.5px;width:12px;height:3px;background:#f0f0f0;"></div>
<div style="left:3282px;top:855.5px;width:475px;height:4px;background:#0a0a0a;border-radius:2px;"></div>
<div style="left:3282px;top:862px;width:2px;height:9px;background:#3c3c3c;"></div>
<div style="left:3360.85px;top:862px;width:2px;height:6px;background:#3c3c3c;"></div>
<div style="left:3439.51px;top:862px;width:2px;height:6px;background:#3c3c3c;"></div>
<div style="left:3518.5px;top:862px;width:2px;height:9px;background:#3c3c3c;"></div>
<div style="left:3755px;top:862px;width:2px;height:9px;background:#3c3c3c;"></div>
<div style="left:3535.33px;top:862px;width:2px;height:5px;background:#3c3c3c;"></div>
<div style="left:3551.17px;top:862px;width:2px;height:5px;background:#3c3c3c;"></div>
<div style="left:3567px;top:862px;width:2px;height:5px;background:#3c3c3c;"></div>
<div style="left:3582.83px;top:862px;width:2px;height:5px;background:#3c3c3c;"></div>
<div style="left:3598.67px;top:862px;width:2px;height:5px;background:#3c3c3c;"></div>
<div style="left:3614.5px;top:862px;width:2px;height:5px;background:#3c3c3c;"></div>
<div style="left:3630.33px;top:862px;width:2px;height:5px;background:#3c3c3c;"></div>
<div style="left:3646.17px;top:862px;width:2px;height:5px;background:#3c3c3c;"></div>
<div style="left:3662px;top:862px;width:2px;height:5px;background:#3c3c3c;"></div>
<div style="left:3677.83px;top:862px;width:2px;height:5px;background:#3c3c3c;"></div>
<div style="left:3693.67px;top:862px;width:2px;height:5px;background:#3c3c3c;"></div>
<div style="left:3709.5px;top:862px;width:2px;height:5px;background:#3c3c3c;"></div>
<div style="left:3725.33px;top:862px;width:2px;height:5px;background:#3c3c3c;"></div>
<div style="left:3741.17px;top:862px;width:2px;height:5px;background:#3c3c3c;"></div>
<div style="left:3367.5px;top:845.5px;width:8px;height:21px;background:#d4650c;border-radius:1px;box-shadow:0 0 0 1.200px #2a1404;"></div>
<div style="left:3757.5px;top:845.5px;width:25px;height:27px;background:#2e2e2e;border-radius:5px;"></div>
<div style="left:3764px;top:857.5px;width:12px;height:3px;background:#f0f0f0;"></div>
<div style="left:3768.5px;top:853px;width:3px;height:12px;background:#f0f0f0;"></div>
<div style="left:3785.5px;top:845.5px;width:25px;height:27px;background:#2e2e2e;border-radius:5px;"></div>
<div style="left:3789px;top:857px;width:18px;height:4px;background:#f0f0f0;"></div>
<div style="left:3796px;top:850px;width:4px;height:18px;background:#f0f0f0;"></div>
<div style="top:895.5px;height:30px;line-height:30px;font-size:22px;color:#fff;white-space:pre;left:2664px;width:400px;text-align:right;">Opacity</div>
<div style="left:3083px;top:888.5px;width:138.5px;height:38px;background:#0c0c0c;border-radius:1px;box-shadow:0 0 0 1.5px #050505;"></div>
<div style="top:893.5px;height:30px;line-height:30px;font-size:22px;color:#fff;white-space:pre;left:3089px;">1.000</div>
<svg style="left:3199px;top:896.5px;" width="7" height="4" viewBox="0 0 7 4"><path d="M0 4L3.500 0L7 4z" fill="#e0e0e0"/></svg>
<svg style="left:3199px;top:915px;" width="7" height="4" viewBox="0 0 7 4"><path d="M0 0L3.500 4L7 0z" fill="#e0e0e0"/></svg>
<div style="left:3225px;top:904px;width:588px;height:4px;background:#0a0a0a;border-radius:2px;"></div>
<div style="left:3225px;top:913px;width:2px;height:6px;background:#3c3c3c;"></div>
<div style="left:3322.67px;top:913px;width:2px;height:6px;background:#3c3c3c;"></div>
<div style="left:3420.33px;top:913px;width:2px;height:6px;background:#3c3c3c;"></div>
<div style="left:3518px;top:913px;width:2px;height:10px;background:#3c3c3c;"></div>
<div style="left:3615.67px;top:913px;width:2px;height:6px;background:#3c3c3c;"></div>
<div style="left:3713.33px;top:913px;width:2px;height:6px;background:#3c3c3c;"></div>
<div style="left:3811px;top:913px;width:2px;height:6px;background:#3c3c3c;"></div>
<div style="left:3807.53px;top:895px;width:8px;height:21px;background:#d4650c;border-radius:1px;box-shadow:0 0 0 1.200px #2a1404;"></div>
<div style="left:2882px;top:946.5px;width:320px;height:41.5px;background:#000;"></div>
<div style="left:2884.5px;top:949px;width:137.5px;height:39.5px;background:#1e1e1e;"></div>
<div style="left:3022px;top:947.5px;width:180px;height:40px;background:#000;"></div>
<div style="left:2882px;top:987.5px;width:937.5px;height:2px;background:#0a0a0a;"></div>
<div style="top:955px;height:30px;line-height:30px;font-size:22px;color:#fff;white-space:pre;left:2913.5px;">Settings</div>
<div style="top:954px;height:30px;line-height:30px;font-size:22px;color:#8c8c8c;white-space:pre;left:3055.5px;letter-spacing:-0.350px;">Appearance</div>
<div style="top:998px;height:30px;line-height:30px;font-size:22px;color:#fff;white-space:pre;left:2662px;width:400px;text-align:right;">Blend Mode</div>
<div style="left:3084px;top:994px;width:195.5px;height:34.5px;background:#2a2a2a;border-radius:4px;"></div>
<div style="top:997.75px;height:30px;line-height:30px;font-size:22px;color:#fff;white-space:pre;left:3087px;">Add</div>
<svg style="left:3257.5px;top:1007.5px;" width="14" height="7.5" viewBox="0 0 14 7.5"><path d="M0 0H14 L7.0 7 Z" fill="#d8d8d8"/></svg>
<div style="top:998px;height:30px;line-height:30px;font-size:22px;color:#fff;white-space:pre;left:3283.5px;">Invert</div>
<div style="left:3362px;top:1001.5px;width:22px;height:22px;background:#0c0c0c;box-sizing:border-box;border:2px solid #a8a8a8;border-radius:2px;"></div>
<div style="top:998px;height:30px;line-height:30px;font-size:22px;color:#fff;white-space:pre;left:3451px;">Preserve Alpha</div>
<div style="left:3616px;top:1001.5px;width:22px;height:22px;background:#0c0c0c;box-sizing:border-box;border:2px solid #a8a8a8;border-radius:2px;"></div>
<div style="top:1044px;height:30px;line-height:30px;font-size:22px;color:#fff;white-space:pre;left:2662px;width:400px;text-align:right;">Blend Channel</div>
<div style="left:3084px;top:1040px;width:195.5px;height:34.5px;background:#2a2a2a;border-radius:4px;"></div>
<div style="top:1043.75px;height:30px;line-height:30px;font-size:22px;color:#fff;white-space:pre;left:3087px;">Color</div>
<svg style="left:3257.5px;top:1053.5px;" width="14" height="7.5" viewBox="0 0 14 7.5"><path d="M0 0H14 L7.0 7 Z" fill="#d8d8d8"/></svg>
<div style="top:1090px;height:30px;line-height:30px;font-size:22px;color:#fff;white-space:pre;left:2662px;width:400px;text-align:right;">Mapping</div>
<div style="left:3084px;top:1086px;width:195.5px;height:34.5px;background:#2a2a2a;border-radius:4px;"></div>
<div style="top:1089.75px;height:30px;line-height:30px;font-size:22px;color:#fff;white-space:pre;left:3087px;">Planar</div>
<svg style="left:3257.5px;top:1099.5px;" width="14" height="7.5" viewBox="0 0 14 7.5"><path d="M0 0H14 L7.0 7 Z" fill="#d8d8d8"/></svg>
<div style="left:2882px;top:1127px;width:937.5px;height:28px;background:#3c3c3c;"></div>
<div style="left:2882px;top:1154px;width:30px;height:2px;background:#1e1e1e;"></div>
<svg style="left:2887px;top:1133.5px;" width="18" height="16" viewBox="0 0 18 16"><path d="M0 0H18L9 16z" fill="#9a9a9a"/></svg>
<div style="top:1126.5px;height:30px;line-height:30px;font-size:22px;color:#fff;white-space:pre;left:3066px;width:600px;text-align:center;">Transform (Core)</div>
<div style="top:1164px;height:30px;line-height:30px;font-size:22px;color:#fff;white-space:pre;left:2664px;width:400px;text-align:right;">Latitude</div>
<div style="left:3083px;top:1156px;width:138.5px;height:38px;background:#0c0c0c;border-radius:1px;box-shadow:0 0 0 1.5px #050505;"></div>
<div style="top:1161px;height:30px;line-height:30px;font-size:22px;color:#fff;white-space:pre;left:3089px;">0.00</div>
<svg style="left:3199px;top:1164px;" width="7" height="4" viewBox="0 0 7 4"><path d="M0 4L3.500 0L7 4z" fill="#e0e0e0"/></svg>
<svg style="left:3199px;top:1182.5px;" width="7" height="4" viewBox="0 0 7 4"><path d="M0 0L3.500 4L7 0z" fill="#e0e0e0"/></svg>
<div style="left:3225px;top:1171.5px;width:588px;height:4px;background:#0a0a0a;border-radius:2px;"></div>
<div style="left:3225px;top:1180.5px;width:2px;height:6px;background:#3c3c3c;"></div>
<div style="left:3322.67px;top:1180.5px;width:2px;height:6px;background:#3c3c3c;"></div>
<div style="left:3420.33px;top:1180.5px;width:2px;height:6px;background:#3c3c3c;"></div>
<div style="left:3518px;top:1180.5px;width:2px;height:10px;background:#3c3c3c;"></div>
<div style="left:3615.67px;top:1180.5px;width:2px;height:6px;background:#3c3c3c;"></div>
<div style="left:3713.33px;top:1180.5px;width:2px;height:6px;background:#3c3c3c;"></div>
<div style="left:3811px;top:1180.5px;width:2px;height:6px;background:#3c3c3c;"></div>
<div style="left:3514.12px;top:1162.5px;width:8px;height:21px;background:#d4650c;border-radius:1px;box-shadow:0 0 0 1.200px #2a1404;"></div>
<div style="top:1214px;height:30px;line-height:30px;font-size:22px;color:#fff;white-space:pre;left:2664px;width:400px;text-align:right;">Longitude</div>
<div style="left:3083px;top:1206px;width:138.5px;height:38px;background:#0c0c0c;border-radius:1px;box-shadow:0 0 0 1.5px #050505;"></div>
<div style="top:1211px;height:30px;line-height:30px;font-size:22px;color:#fff;white-space:pre;left:3089px;">180.00</div>
<svg style="left:3199px;top:1214px;" width="7" height="4" viewBox="0 0 7 4"><path d="M0 4L3.500 0L7 4z" fill="#e0e0e0"/></svg>
<svg style="left:3199px;top:1232.5px;" width="7" height="4" viewBox="0 0 7 4"><path d="M0 0L3.500 4L7 0z" fill="#e0e0e0"/></svg>
<div style="left:3225px;top:1221.5px;width:588px;height:4px;background:#0a0a0a;border-radius:2px;"></div>
<div style="left:3225px;top:1230.5px;width:2px;height:6px;background:#3c3c3c;"></div>
<div style="left:3322.67px;top:1230.5px;width:2px;height:6px;background:#3c3c3c;"></div>
<div style="left:3420.33px;top:1230.5px;width:2px;height:6px;background:#3c3c3c;"></div>
<div style="left:3518px;top:1230.5px;width:2px;height:10px;background:#3c3c3c;"></div>
<div style="left:3615.67px;top:1230.5px;width:2px;height:6px;background:#3c3c3c;"></div>
<div style="left:3713.33px;top:1230.5px;width:2px;height:6px;background:#3c3c3c;"></div>
<div style="left:3811px;top:1230.5px;width:2px;height:6px;background:#3c3c3c;"></div>
<div style="left:3514.12px;top:1212.5px;width:8px;height:21px;background:#d4650c;border-radius:1px;box-shadow:0 0 0 1.200px #2a1404;"></div>
<div style="top:1264px;height:30px;line-height:30px;font-size:22px;color:#fff;white-space:pre;left:2664px;width:400px;text-align:right;">Width</div>
<div style="left:3083px;top:1256px;width:138.5px;height:38px;background:#0c0c0c;border-radius:1px;box-shadow:0 0 0 1.5px #050505;"></div>
<div style="top:1261px;height:30px;line-height:30px;font-size:22px;color:#fff;white-space:pre;left:3089px;">100.00</div>
<svg style="left:3199px;top:1264px;" width="7" height="4" viewBox="0 0 7 4"><path d="M0 4L3.500 0L7 4z" fill="#e0e0e0"/></svg>
<svg style="left:3199px;top:1282.5px;" width="7" height="4" viewBox="0 0 7 4"><path d="M0 0L3.500 4L7 0z" fill="#e0e0e0"/></svg>
<div style="left:3225px;top:1271.5px;width:588px;height:4px;background:#0a0a0a;border-radius:2px;"></div>
<div style="left:3225px;top:1280.5px;width:2px;height:6px;background:#3c3c3c;"></div>
<div style="left:3322.67px;top:1280.5px;width:2px;height:6px;background:#3c3c3c;"></div>
<div style="left:3420.33px;top:1280.5px;width:2px;height:6px;background:#3c3c3c;"></div>
<div style="left:3518px;top:1280.5px;width:2px;height:10px;background:#3c3c3c;"></div>
<div style="left:3615.67px;top:1280.5px;width:2px;height:6px;background:#3c3c3c;"></div>
<div style="left:3713.33px;top:1280.5px;width:2px;height:6px;background:#3c3c3c;"></div>
<div style="left:3811px;top:1280.5px;width:2px;height:6px;background:#3c3c3c;"></div>
<div style="left:3537.53px;top:1280.5px;width:2px;height:5px;background:#3c3c3c;"></div>
<div style="left:3557.07px;top:1280.5px;width:2px;height:5px;background:#3c3c3c;"></div>
<div style="left:3576.6px;top:1280.5px;width:2px;height:5px;background:#3c3c3c;"></div>
<div style="left:3596.13px;top:1280.5px;width:2px;height:5px;background:#3c3c3c;"></div>
<div style="left:3615.67px;top:1280.5px;width:2px;height:5px;background:#3c3c3c;"></div>
<div style="left:3635.2px;top:1280.5px;width:2px;height:5px;background:#3c3c3c;"></div>
<div style="left:3654.73px;top:1280.5px;width:2px;height:5px;background:#3c3c3c;"></div>
<div style="left:3674.27px;top:1280.5px;width:2px;height:5px;background:#3c3c3c;"></div>
<div style="left:3693.8px;top:1280.5px;width:2px;height:5px;background:#3c3c3c;"></div>
<div style="left:3713.33px;top:1280.5px;width:2px;height:5px;background:#3c3c3c;"></div>
<div style="left:3732.87px;top:1280.5px;width:2px;height:5px;background:#3c3c3c;"></div>
<div style="left:3752.4px;top:1280.5px;width:2px;height:5px;background:#3c3c3c;"></div>
<div style="left:3771.93px;top:1280.5px;width:2px;height:5px;background:#3c3c3c;"></div>
<div style="left:3791.47px;top:1280.5px;width:2px;height:5px;background:#3c3c3c;"></div>
<div style="left:3806.65px;top:1262.5px;width:8px;height:21px;background:#d4650c;border-radius:1px;box-shadow:0 0 0 1.200px #2a1404;"></div>
<div style="top:1314px;height:30px;line-height:30px;font-size:22px;color:#fff;white-space:pre;left:2664px;width:400px;text-align:right;">Height</div>
<div style="left:3083px;top:1306px;width:138.5px;height:38px;background:#0c0c0c;border-radius:1px;box-shadow:0 0 0 1.5px #050505;"></div>
<div style="top:1311px;height:30px;line-height:30px;font-size:22px;color:#fff;white-space:pre;left:3089px;">100.00</div>
<svg style="left:3199px;top:1314px;" width="7" height="4" viewBox="0 0 7 4"><path d="M0 4L3.500 0L7 4z" fill="#e0e0e0"/></svg>
<svg style="left:3199px;top:1332.5px;" width="7" height="4" viewBox="0 0 7 4"><path d="M0 0L3.500 4L7 0z" fill="#e0e0e0"/></svg>
<div style="left:3225px;top:1321.5px;width:588px;height:4px;background:#0a0a0a;border-radius:2px;"></div>
<div style="left:3225px;top:1330.5px;width:2px;height:6px;background:#3c3c3c;"></div>
<div style="left:3322.67px;top:1330.5px;width:2px;height:6px;background:#3c3c3c;"></div>
<div style="left:3420.33px;top:1330.5px;width:2px;height:6px;background:#3c3c3c;"></div>
<div style="left:3518px;top:1330.5px;width:2px;height:10px;background:#3c3c3c;"></div>
<div style="left:3615.67px;top:1330.5px;width:2px;height:6px;background:#3c3c3c;"></div>
<div style="left:3713.33px;top:1330.5px;width:2px;height:6px;background:#3c3c3c;"></div>
<div style="left:3811px;top:1330.5px;width:2px;height:6px;background:#3c3c3c;"></div>
<div style="left:3537.53px;top:1330.5px;width:2px;height:5px;background:#3c3c3c;"></div>
<div style="left:3557.07px;top:1330.5px;width:2px;height:5px;background:#3c3c3c;"></div>
<div style="left:3576.6px;top:1330.5px;width:2px;height:5px;background:#3c3c3c;"></div>
<div style="left:3596.13px;top:1330.5px;width:2px;height:5px;background:#3c3c3c;"></div>
<div style="left:3615.67px;top:1330.5px;width:2px;height:5px;background:#3c3c3c;"></div>
<div style="left:3635.2px;top:1330.5px;width:2px;height:5px;background:#3c3c3c;"></div>
<div style="left:3654.73px;top:1330.5px;width:2px;height:5px;background:#3c3c3c;"></div>
<div style="left:3674.27px;top:1330.5px;width:2px;height:5px;background:#3c3c3c;"></div>
<div style="left:3693.8px;top:1330.5px;width:2px;height:5px;background:#3c3c3c;"></div>
<div style="left:3713.33px;top:1330.5px;width:2px;height:5px;background:#3c3c3c;"></div>
<div style="left:3732.87px;top:1330.5px;width:2px;height:5px;background:#3c3c3c;"></div>
<div style="left:3752.4px;top:1330.5px;width:2px;height:5px;background:#3c3c3c;"></div>
<div style="left:3771.93px;top:1330.5px;width:2px;height:5px;background:#3c3c3c;"></div>
<div style="left:3791.47px;top:1330.5px;width:2px;height:5px;background:#3c3c3c;"></div>
<div style="left:3806.65px;top:1312.5px;width:8px;height:21px;background:#d4650c;border-radius:1px;box-shadow:0 0 0 1.200px #2a1404;"></div>
<div style="left:2882px;top:1355px;width:937.5px;height:28px;background:#3c3c3c;"></div>
<div style="left:2882px;top:1382px;width:30px;height:2px;background:#1e1e1e;"></div>
<svg style="left:2887px;top:1361.5px;" width="18" height="16" viewBox="0 0 18 16"><path d="M0 0H18L9 16z" fill="#9a9a9a"/></svg>
<div style="top:1354.5px;height:30px;line-height:30px;font-size:22px;color:#fff;white-space:pre;left:3066px;width:600px;text-align:center;">Transform (Extended)</div>
<div style="top:1392.5px;height:30px;line-height:30px;font-size:22px;color:#fff;white-space:pre;left:2664px;width:400px;text-align:right;">Handle U</div>
<div style="left:3083px;top:1384.5px;width:138.5px;height:38px;background:#0c0c0c;border-radius:1px;box-shadow:0 0 0 1.5px #050505;"></div>
<div style="top:1389.5px;height:30px;line-height:30px;font-size:22px;color:#fff;white-space:pre;left:3089px;">0.000</div>
<svg style="left:3199px;top:1392.5px;" width="7" height="4" viewBox="0 0 7 4"><path d="M0 4L3.500 0L7 4z" fill="#e0e0e0"/></svg>
<svg style="left:3199px;top:1411px;" width="7" height="4" viewBox="0 0 7 4"><path d="M0 0L3.500 4L7 0z" fill="#e0e0e0"/></svg>
<div style="left:3225px;top:1400px;width:588px;height:4px;background:#0a0a0a;border-radius:2px;"></div>
<div style="left:3225px;top:1409px;width:2px;height:6px;background:#3c3c3c;"></div>
<div style="left:3322.67px;top:1409px;width:2px;height:6px;background:#3c3c3c;"></div>
<div style="left:3420.33px;top:1409px;width:2px;height:6px;background:#3c3c3c;"></div>
<div style="left:3518px;top:1409px;width:2px;height:10px;background:#3c3c3c;"></div>
<div style="left:3615.67px;top:1409px;width:2px;height:6px;background:#3c3c3c;"></div>
<div style="left:3713.33px;top:1409px;width:2px;height:6px;background:#3c3c3c;"></div>
<div style="left:3811px;top:1409px;width:2px;height:6px;background:#3c3c3c;"></div>
<div style="left:3514.12px;top:1391px;width:8px;height:21px;background:#d4650c;border-radius:1px;box-shadow:0 0 0 1.200px #2a1404;"></div>
<div style="top:1442px;height:30px;line-height:30px;font-size:22px;color:#fff;white-space:pre;left:2664px;width:400px;text-align:right;">Handle V</div>
<div style="left:3083px;top:1434px;width:138.5px;height:38px;background:#0c0c0c;border-radius:1px;box-shadow:0 0 0 1.5px #050505;"></div>
<div style="top:1439px;height:30px;line-height:30px;font-size:22px;color:#fff;white-space:pre;left:3089px;">0.000</div>
<svg style="left:3199px;top:1442px;" width="7" height="4" viewBox="0 0 7 4"><path d="M0 4L3.500 0L7 4z" fill="#e0e0e0"/></svg>
<svg style="left:3199px;top:1460.5px;" width="7" height="4" viewBox="0 0 7 4"><path d="M0 0L3.500 4L7 0z" fill="#e0e0e0"/></svg>
<div style="left:3225px;top:1449.5px;width:588px;height:4px;background:#0a0a0a;border-radius:2px;"></div>
<div style="left:3225px;top:1458.5px;width:2px;height:6px;background:#3c3c3c;"></div>
<div style="left:3322.67px;top:1458.5px;width:2px;height:6px;background:#3c3c3c;"></div>
<div style="left:3420.33px;top:1458.5px;width:2px;height:6px;background:#3c3c3c;"></div>
<div style="left:3518px;top:1458.5px;width:2px;height:10px;background:#3c3c3c;"></div>
<div style="left:3615.67px;top:1458.5px;width:2px;height:6px;background:#3c3c3c;"></div>
<div style="left:3713.33px;top:1458.5px;width:2px;height:6px;background:#3c3c3c;"></div>
<div style="left:3811px;top:1458.5px;width:2px;height:6px;background:#3c3c3c;"></div>
<div style="left:3514.12px;top:1440.5px;width:8px;height:21px;background:#d4650c;border-radius:1px;box-shadow:0 0 0 1.200px #2a1404;"></div>
<div style="left:2882px;top:1488px;width:937.5px;height:2px;background:#161616;"></div>
<div style="left:2882px;top:1491.8px;width:937.5px;height:2.4px;background:#444;"></div>
<div style="top:1514px;height:30px;line-height:30px;font-size:22px;color:#484848;white-space:pre;left:2662px;width:400px;text-align:right;">Rotations</div>
<div style="left:3083px;top:1518px;width:21px;height:21px;background:#101010;box-sizing:border-box;border:2px solid #3a3a3a;border-radius:2px;"></div>
<div style="top:1513.5px;height:30px;line-height:30px;font-size:22px;color:#484848;white-space:pre;left:3116.5px;letter-spacing:-0.300px;">Enable Advanced Rotations</div>
<div style="top:1560px;height:30px;line-height:30px;font-size:22px;color:#484848;white-space:pre;left:2662px;width:400px;text-align:right;">Rotation Mode</div>
<div style="top:1559px;height:30px;line-height:30px;font-size:22px;color:#484848;white-space:pre;left:3086px;">Free</div>
<svg style="left:3258px;top:1569.75px;" width="14" height="7.5" viewBox="0 0 14 7.5"><path d="M0 0H14 L7.0 7 Z" fill="#c0c0c0"/></svg>
<div style="top:1606px;height:30px;line-height:30px;font-size:22px;color:#484848;white-space:pre;left:2662px;width:400px;text-align:right;">Adjustments</div>
<svg style="left:3098px;top:1609.5px;" width="64" height="23" viewBox="0 0 64 23"><path d="M0 11.500L9 3V20z" fill="#000"/><rect x="9" y="9" width="7" height="5" fill="#000"/><rect x="14.500" y="0" width="2.500" height="23" fill="#000"/><path d="M64 11.500L55 3V20z" fill="#000"/><rect x="48" y="9" width="7" height="5" fill="#000"/><rect x="47" y="0" width="2.500" height="23" fill="#000"/><text x="32" y="18.500" font-family="Liberation Sans, sans-serif" font-size="19" text-anchor="middle" fill="#484848">X</text></svg>
<svg style="left:3194px;top:1609.5px;" width="64" height="23" viewBox="0 0 64 23"><path d="M0 11.500L9 3V20z" fill="#000"/><rect x="9" y="9" width="7" height="5" fill="#000"/><rect x="14.500" y="0" width="2.500" height="23" fill="#000"/><path d="M64 11.500L55 3V20z" fill="#000"/><rect x="48" y="9" width="7" height="5" fill="#000"/><rect x="47" y="0" width="2.500" height="23" fill="#000"/><text x="32" y="18.500" font-family="Liberation Sans, sans-serif" font-size="19" text-anchor="middle" fill="#484848">Y</text></svg>
<svg style="left:3290px;top:1609.5px;" width="64" height="23" viewBox="0 0 64 23"><path d="M0 11.500L9 3V20z" fill="#000"/><rect x="9" y="9" width="7" height="5" fill="#000"/><rect x="14.500" y="0" width="2.500" height="23" fill="#000"/><path d="M64 11.500L55 3V20z" fill="#000"/><rect x="48" y="9" width="7" height="5" fill="#000"/><rect x="47" y="0" width="2.500" height="23" fill="#000"/><text x="32" y="18.500" font-family="Liberation Sans, sans-serif" font-size="19" text-anchor="middle" fill="#484848">Z</text></svg>
<div style="top:1605px;height:30px;line-height:30px;font-size:22px;color:#484848;white-space:pre;left:3403px;">Flip</div>
<div style="top:1605px;height:30px;line-height:30px;font-size:22px;color:#484848;white-space:pre;left:3513px;">Reset</div>
<div style="left:742px;top:142.5px;width:9.5px;height:2162px;background:#000;"></div>
<div style="left:74px;top:761.5px;width:668px;height:9px;background:#000;"></div>
<div style="left:751.5px;top:1579.5px;width:2120px;height:9.5px;background:#000;"></div>
</body></html>
